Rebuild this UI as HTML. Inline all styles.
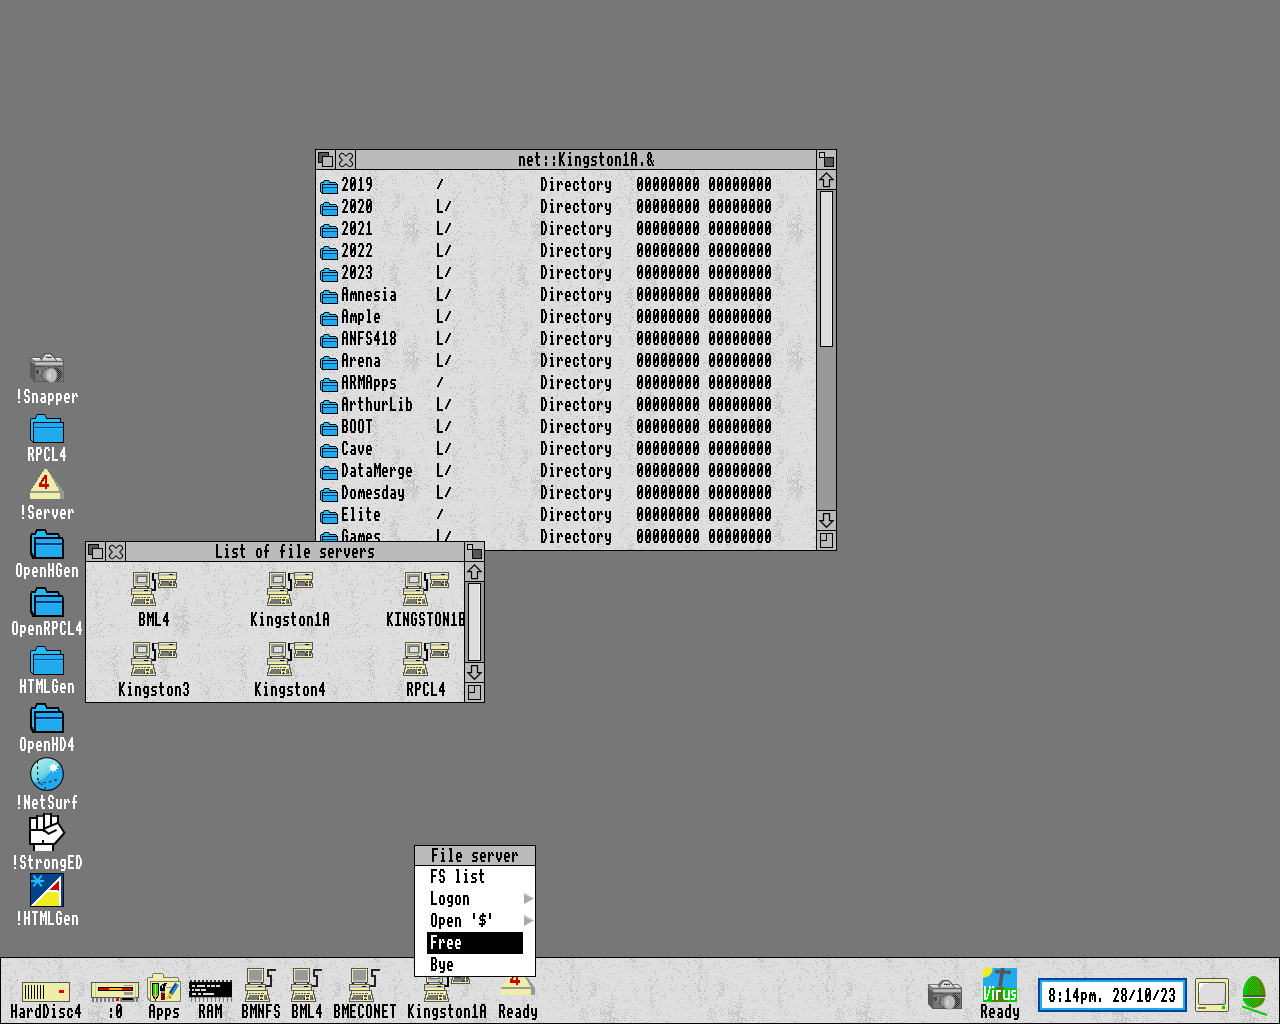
<!DOCTYPE html>
<html lang="en"><head><meta charset="utf-8"><title>RISC OS desktop - net::Kingston1A.&amp;</title><style>
html,body{margin:0;padding:0}
body{width:1280px;height:1024px;overflow:hidden;background:#777;position:relative;font-family:"Liberation Mono",monospace}
svg{position:absolute;display:block;left:0;top:0}
.t{position:absolute;height:16px;font:bold 13.33px/16px "Liberation Mono",monospace;color:transparent;white-space:pre;overflow:hidden}
.win{position:absolute;background:#000;overflow:hidden}
.tb{position:absolute;width:19px;height:19px;background:#bbb;overflow:hidden}
.tbar{position:absolute;height:19px;background:#bbb;overflow:hidden}
.well{position:absolute;width:19px;background:#999}
.sl{position:absolute;left:3px;width:11px;border:1px solid #000;background:#ddd;box-shadow:inset -1px 0 #f2f2f2}
.wc{position:absolute;left:1px;top:21px;overflow:hidden;background:#ddd}
.ibar{position:absolute;left:0;top:957px;width:1278px;height:65px;border:1px solid #000;overflow:hidden;background:#ddd;z-index:3}
.menu{position:absolute;left:414px;top:845px;width:120px;height:130px;border:1px solid #000;background:#fff;z-index:4;overflow:hidden}
.mt{position:absolute;left:0;top:0;width:120px;height:19px;background:#bbb;border-bottom:1px solid #000}
.mi{position:absolute;left:0;width:120px;height:22px}
.hl{position:absolute;left:12px;top:0;width:96px;height:22px;background:#000}
</style></head>
<body>
<svg width="0" height="0" style="position:absolute"><defs><pattern id="tx" width="128" height="128" patternUnits="userSpaceOnUse"><rect width="128" height="128" fill="#dedede"/><path fill="#bdbdbd" d="M6 0h1v1h-1zM16 0h1v1h-1zM26 0h1v1h-1zM28 0h1v1h-1zM48 0h1v1h-1zM54 0h1v1h-1zM57 0h1v1h-1zM59 0h1v1h-1zM62 0h1v1h-1zM66 0h1v1h-1zM118 0h1v1h-1zM120 0h1v1h-1zM122 0h1v1h-1zM32 1h1v1h-1zM59 1h1v1h-1zM68 1h1v1h-1zM90 1h1v1h-1zM117 1h1v1h-1zM118 1h1v1h-1zM121 1h1v1h-1zM20 2h1v1h-1zM46 2h1v1h-1zM52 2h1v1h-1zM54 2h1v1h-1zM60 2h1v1h-1zM86 2h1v1h-1zM120 2h1v1h-1zM122 2h1v1h-1zM22 3h1v1h-1zM29 3h1v1h-1zM53 3h1v1h-1zM55 3h1v1h-1zM59 3h1v1h-1zM93 3h1v1h-1zM111 3h1v1h-1zM115 3h1v1h-1zM119 3h1v1h-1zM120 3h1v1h-1zM121 3h1v1h-1zM125 3h1v1h-1zM6 4h1v1h-1zM20 4h1v1h-1zM28 4h1v1h-1zM32 4h1v1h-1zM34 4h1v1h-1zM47 4h1v1h-1zM60 4h1v1h-1zM78 4h1v1h-1zM89 4h1v1h-1zM114 4h1v1h-1zM116 4h1v1h-1zM122 4h1v1h-1zM7 5h1v1h-1zM23 5h1v1h-1zM29 5h1v1h-1zM47 5h1v1h-1zM55 5h1v1h-1zM57 5h1v1h-1zM73 5h1v1h-1zM120 5h1v1h-1zM4 6h1v1h-1zM28 6h1v1h-1zM32 6h1v1h-1zM39 6h1v1h-1zM54 6h1v1h-1zM58 6h1v1h-1zM60 6h1v1h-1zM62 6h1v1h-1zM73 6h1v1h-1zM76 6h1v1h-1zM100 6h1v1h-1zM122 6h1v1h-1zM1 7h1v1h-1zM5 7h1v1h-1zM9 7h1v1h-1zM36 7h1v1h-1zM44 7h1v1h-1zM47 7h1v1h-1zM59 7h1v1h-1zM61 7h1v1h-1zM100 7h1v1h-1zM105 7h1v1h-1zM117 7h1v1h-1zM1 8h1v1h-1zM50 8h1v1h-1zM58 8h1v1h-1zM59 8h1v1h-1zM70 8h1v1h-1zM73 8h1v1h-1zM120 8h1v1h-1zM122 8h1v1h-1zM124 8h1v1h-1zM27 9h1v1h-1zM43 9h1v1h-1zM57 9h1v1h-1zM59 9h1v1h-1zM61 9h1v1h-1zM79 9h1v1h-1zM87 9h1v1h-1zM96 9h1v1h-1zM106 9h1v1h-1zM119 9h1v1h-1zM21 10h1v1h-1zM25 10h1v1h-1zM33 10h1v1h-1zM34 10h1v1h-1zM58 10h1v1h-1zM69 10h1v1h-1zM76 10h1v1h-1zM123 10h1v1h-1zM4 11h1v1h-1zM56 11h1v1h-1zM60 11h1v1h-1zM61 11h1v1h-1zM66 11h1v1h-1zM67 11h1v1h-1zM86 11h1v1h-1zM117 11h1v1h-1zM120 11h1v1h-1zM10 12h1v1h-1zM35 12h1v1h-1zM38 12h1v1h-1zM47 12h1v1h-1zM63 12h1v1h-1zM107 12h1v1h-1zM0 13h1v1h-1zM14 13h1v1h-1zM37 13h1v1h-1zM40 13h1v1h-1zM46 13h1v1h-1zM59 13h1v1h-1zM76 13h1v1h-1zM79 13h1v1h-1zM1 14h1v1h-1zM14 14h1v1h-1zM58 14h1v1h-1zM60 14h1v1h-1zM61 14h1v1h-1zM65 14h1v1h-1zM66 14h1v1h-1zM110 14h1v1h-1zM126 14h1v1h-1zM4 15h1v1h-1zM39 15h1v1h-1zM53 15h1v1h-1zM55 15h1v1h-1zM57 15h1v1h-1zM63 15h1v1h-1zM82 15h1v1h-1zM97 15h1v1h-1zM101 15h1v1h-1zM14 16h1v1h-1zM47 16h1v1h-1zM52 16h1v1h-1zM29 17h1v1h-1zM59 17h1v1h-1zM65 17h1v1h-1zM10 18h1v1h-1zM30 18h1v1h-1zM37 18h1v1h-1zM45 18h1v1h-1zM48 18h1v1h-1zM60 18h1v1h-1zM66 18h1v1h-1zM94 18h1v1h-1zM117 18h1v1h-1zM1 19h1v1h-1zM25 19h1v1h-1zM31 19h1v1h-1zM42 19h1v1h-1zM47 19h1v1h-1zM52 19h1v1h-1zM59 19h1v1h-1zM60 19h1v1h-1zM61 19h1v1h-1zM102 19h1v1h-1zM5 20h1v1h-1zM30 20h1v1h-1zM31 20h1v1h-1zM60 20h1v1h-1zM74 20h1v1h-1zM79 20h1v1h-1zM83 20h1v1h-1zM9 21h1v1h-1zM16 21h1v1h-1zM57 21h1v1h-1zM65 21h1v1h-1zM77 21h1v1h-1zM7 22h1v1h-1zM9 22h1v1h-1zM15 22h1v1h-1zM16 22h1v1h-1zM31 22h1v1h-1zM50 22h1v1h-1zM58 22h1v1h-1zM62 22h1v1h-1zM66 22h1v1h-1zM86 22h1v1h-1zM107 22h1v1h-1zM119 22h1v1h-1zM10 23h1v1h-1zM24 23h1v1h-1zM59 23h1v1h-1zM64 23h1v1h-1zM77 23h1v1h-1zM83 23h1v1h-1zM14 24h1v1h-1zM58 24h1v1h-1zM69 24h1v1h-1zM78 24h1v1h-1zM80 24h1v1h-1zM81 24h1v1h-1zM106 24h1v1h-1zM53 25h1v1h-1zM54 25h1v1h-1zM65 25h1v1h-1zM79 25h1v1h-1zM81 25h1v1h-1zM83 25h1v1h-1zM89 25h1v1h-1zM104 25h1v1h-1zM118 25h1v1h-1zM119 25h1v1h-1zM8 26h1v1h-1zM12 26h1v1h-1zM30 26h1v1h-1zM41 26h1v1h-1zM56 26h1v1h-1zM60 26h1v1h-1zM66 26h1v1h-1zM73 26h1v1h-1zM78 26h1v1h-1zM82 26h1v1h-1zM86 26h1v1h-1zM5 27h1v1h-1zM13 27h1v1h-1zM35 27h1v1h-1zM45 27h1v1h-1zM47 27h1v1h-1zM57 27h1v1h-1zM74 27h1v1h-1zM79 27h1v1h-1zM81 27h1v1h-1zM83 27h1v1h-1zM92 27h1v1h-1zM95 27h1v1h-1zM105 27h1v1h-1zM4 28h1v1h-1zM8 28h1v1h-1zM10 28h1v1h-1zM42 28h1v1h-1zM44 28h1v1h-1zM50 28h1v1h-1zM54 28h1v1h-1zM55 28h1v1h-1zM58 28h1v1h-1zM80 28h1v1h-1zM82 28h1v1h-1zM86 28h1v1h-1zM9 29h1v1h-1zM11 29h1v1h-1zM33 29h1v1h-1zM42 29h1v1h-1zM57 29h1v1h-1zM64 29h1v1h-1zM81 29h1v1h-1zM87 29h1v1h-1zM4 30h1v1h-1zM10 30h1v1h-1zM12 30h1v1h-1zM17 30h1v1h-1zM21 30h1v1h-1zM56 30h1v1h-1zM58 30h1v1h-1zM79 30h1v1h-1zM82 30h1v1h-1zM85 30h1v1h-1zM122 30h1v1h-1zM126 30h1v1h-1zM9 31h1v1h-1zM10 31h1v1h-1zM30 31h1v1h-1zM41 31h1v1h-1zM52 31h1v1h-1zM57 31h1v1h-1zM69 31h1v1h-1zM79 31h1v1h-1zM81 31h1v1h-1zM83 31h1v1h-1zM88 31h1v1h-1zM109 31h1v1h-1zM121 31h1v1h-1zM122 31h1v1h-1zM22 32h1v1h-1zM28 32h1v1h-1zM32 32h1v1h-1zM41 32h1v1h-1zM57 32h1v1h-1zM60 32h1v1h-1zM63 32h1v1h-1zM64 32h1v1h-1zM77 32h1v1h-1zM81 32h1v1h-1zM82 32h1v1h-1zM83 32h1v1h-1zM102 32h1v1h-1zM122 32h1v1h-1zM4 33h1v1h-1zM9 33h1v1h-1zM32 33h1v1h-1zM44 33h1v1h-1zM57 33h1v1h-1zM58 33h1v1h-1zM59 33h1v1h-1zM63 33h1v1h-1zM77 33h1v1h-1zM96 33h1v1h-1zM119 33h1v1h-1zM124 33h1v1h-1zM10 34h1v1h-1zM15 34h1v1h-1zM44 34h1v1h-1zM54 34h1v1h-1zM78 34h1v1h-1zM80 34h1v1h-1zM82 34h1v1h-1zM12 35h1v1h-1zM16 35h1v1h-1zM58 35h1v1h-1zM61 35h1v1h-1zM72 35h1v1h-1zM79 35h1v1h-1zM10 36h1v1h-1zM14 36h1v1h-1zM24 36h1v1h-1zM62 36h1v1h-1zM78 36h1v1h-1zM81 36h1v1h-1zM82 36h1v1h-1zM98 36h1v1h-1zM123 36h1v1h-1zM23 37h1v1h-1zM79 37h1v1h-1zM80 37h1v1h-1zM81 37h1v1h-1zM99 37h1v1h-1zM110 37h1v1h-1zM121 37h1v1h-1zM9 38h1v1h-1zM21 38h1v1h-1zM42 38h1v1h-1zM47 38h1v1h-1zM49 38h1v1h-1zM58 38h1v1h-1zM76 38h1v1h-1zM77 38h1v1h-1zM98 38h1v1h-1zM102 38h1v1h-1zM10 39h1v1h-1zM23 39h1v1h-1zM59 39h1v1h-1zM63 39h1v1h-1zM67 39h1v1h-1zM99 39h1v1h-1zM123 39h1v1h-1zM12 40h1v1h-1zM48 40h1v1h-1zM59 40h1v1h-1zM60 40h1v1h-1zM64 40h1v1h-1zM76 40h1v1h-1zM91 40h1v1h-1zM103 40h1v1h-1zM124 40h1v1h-1zM10 41h1v1h-1zM19 41h1v1h-1zM40 41h1v1h-1zM49 41h1v1h-1zM56 41h1v1h-1zM63 41h1v1h-1zM65 41h1v1h-1zM72 41h1v1h-1zM75 41h1v1h-1zM92 41h1v1h-1zM98 41h1v1h-1zM99 41h1v1h-1zM101 41h1v1h-1zM111 41h1v1h-1zM8 42h1v1h-1zM10 42h1v1h-1zM13 42h1v1h-1zM14 42h1v1h-1zM19 42h1v1h-1zM60 42h1v1h-1zM89 42h1v1h-1zM111 42h1v1h-1zM114 42h1v1h-1zM0 43h1v1h-1zM11 43h1v1h-1zM37 43h1v1h-1zM51 43h1v1h-1zM59 43h1v1h-1zM89 43h1v1h-1zM115 43h1v1h-1zM10 44h1v1h-1zM12 44h1v1h-1zM63 44h1v1h-1zM66 44h1v1h-1zM92 44h1v1h-1zM94 44h1v1h-1zM96 44h1v1h-1zM100 44h1v1h-1zM110 44h1v1h-1zM2 45h1v1h-1zM9 45h1v1h-1zM48 45h1v1h-1zM61 45h1v1h-1zM89 45h1v1h-1zM97 45h1v1h-1zM98 45h1v1h-1zM99 45h1v1h-1zM6 46h1v1h-1zM10 46h1v1h-1zM17 46h1v1h-1zM36 46h1v1h-1zM50 46h1v1h-1zM56 46h1v1h-1zM68 46h1v1h-1zM88 46h1v1h-1zM96 46h1v1h-1zM101 46h1v1h-1zM119 46h1v1h-1zM9 47h1v1h-1zM13 47h1v1h-1zM25 47h1v1h-1zM59 47h1v1h-1zM60 47h1v1h-1zM74 47h1v1h-1zM75 47h1v1h-1zM86 47h1v1h-1zM93 47h1v1h-1zM12 48h1v1h-1zM60 48h1v1h-1zM76 48h1v1h-1zM90 48h1v1h-1zM92 48h1v1h-1zM94 48h1v1h-1zM95 48h1v1h-1zM98 48h1v1h-1zM99 48h1v1h-1zM100 48h1v1h-1zM11 49h1v1h-1zM41 49h1v1h-1zM57 49h1v1h-1zM95 49h1v1h-1zM97 49h1v1h-1zM99 49h1v1h-1zM101 49h1v1h-1zM122 49h1v1h-1zM45 50h1v1h-1zM48 50h1v1h-1zM68 50h1v1h-1zM70 50h1v1h-1zM73 50h1v1h-1zM79 50h1v1h-1zM83 50h1v1h-1zM87 50h1v1h-1zM91 50h1v1h-1zM96 50h1v1h-1zM100 50h1v1h-1zM11 51h1v1h-1zM16 51h1v1h-1zM69 51h1v1h-1zM71 51h1v1h-1zM81 51h1v1h-1zM87 51h1v1h-1zM97 51h1v1h-1zM103 51h1v1h-1zM115 51h1v1h-1zM120 51h1v1h-1zM34 52h1v1h-1zM68 52h1v1h-1zM78 52h1v1h-1zM89 52h1v1h-1zM91 52h1v1h-1zM98 52h1v1h-1zM107 52h1v1h-1zM112 52h1v1h-1zM124 52h1v1h-1zM13 53h1v1h-1zM15 53h1v1h-1zM26 53h1v1h-1zM69 53h1v1h-1zM71 53h1v1h-1zM77 53h1v1h-1zM87 53h1v1h-1zM91 53h1v1h-1zM95 53h1v1h-1zM97 53h1v1h-1zM99 53h1v1h-1zM101 53h1v1h-1zM122 53h1v1h-1zM127 53h1v1h-1zM20 54h1v1h-1zM66 54h1v1h-1zM68 54h1v1h-1zM70 54h1v1h-1zM73 54h1v1h-1zM88 54h1v1h-1zM90 54h1v1h-1zM92 54h1v1h-1zM93 54h1v1h-1zM94 54h1v1h-1zM96 54h1v1h-1zM97 54h1v1h-1zM98 54h1v1h-1zM102 54h1v1h-1zM104 54h1v1h-1zM114 54h1v1h-1zM115 54h1v1h-1zM6 55h1v1h-1zM52 55h1v1h-1zM61 55h1v1h-1zM72 55h1v1h-1zM73 55h1v1h-1zM75 55h1v1h-1zM79 55h1v1h-1zM87 55h1v1h-1zM89 55h1v1h-1zM91 55h1v1h-1zM93 55h1v1h-1zM95 55h1v1h-1zM97 55h1v1h-1zM111 55h1v1h-1zM11 56h1v1h-1zM16 56h1v1h-1zM27 56h1v1h-1zM70 56h1v1h-1zM87 56h1v1h-1zM89 56h1v1h-1zM90 56h1v1h-1zM93 56h1v1h-1zM94 56h1v1h-1zM96 56h1v1h-1zM97 56h1v1h-1zM102 56h1v1h-1zM106 56h1v1h-1zM122 56h1v1h-1zM17 57h1v1h-1zM66 57h1v1h-1zM67 57h1v1h-1zM73 57h1v1h-1zM81 57h1v1h-1zM91 57h1v1h-1zM95 57h1v1h-1zM97 57h1v1h-1zM113 57h1v1h-1zM28 58h1v1h-1zM49 58h1v1h-1zM70 58h1v1h-1zM74 58h1v1h-1zM92 58h1v1h-1zM93 58h1v1h-1zM96 58h1v1h-1zM98 58h1v1h-1zM108 58h1v1h-1zM118 58h1v1h-1zM121 58h1v1h-1zM61 59h1v1h-1zM67 59h1v1h-1zM69 59h1v1h-1zM71 59h1v1h-1zM87 59h1v1h-1zM97 59h1v1h-1zM98 59h1v1h-1zM100 59h1v1h-1zM110 59h1v1h-1zM111 59h1v1h-1zM70 60h1v1h-1zM92 60h1v1h-1zM97 60h1v1h-1zM100 60h1v1h-1zM101 60h1v1h-1zM102 60h1v1h-1zM104 60h1v1h-1zM112 60h1v1h-1zM120 60h1v1h-1zM122 60h1v1h-1zM14 61h1v1h-1zM15 61h1v1h-1zM47 61h1v1h-1zM59 61h1v1h-1zM66 61h1v1h-1zM68 61h1v1h-1zM71 61h1v1h-1zM73 61h1v1h-1zM89 61h1v1h-1zM91 61h1v1h-1zM93 61h1v1h-1zM95 61h1v1h-1zM97 61h1v1h-1zM100 61h1v1h-1zM101 61h1v1h-1zM103 61h1v1h-1zM0 62h1v1h-1zM8 62h1v1h-1zM12 62h1v1h-1zM21 62h1v1h-1zM24 62h1v1h-1zM40 62h1v1h-1zM50 62h1v1h-1zM75 62h1v1h-1zM86 62h1v1h-1zM90 62h1v1h-1zM92 62h1v1h-1zM96 62h1v1h-1zM97 62h1v1h-1zM98 62h1v1h-1zM100 62h1v1h-1zM104 62h1v1h-1zM105 62h1v1h-1zM108 62h1v1h-1zM111 62h1v1h-1zM122 62h1v1h-1zM8 63h1v1h-1zM25 63h1v1h-1zM27 63h1v1h-1zM71 63h1v1h-1zM89 63h1v1h-1zM91 63h1v1h-1zM94 63h1v1h-1zM95 63h1v1h-1zM99 63h1v1h-1zM101 63h1v1h-1zM125 63h1v1h-1zM4 64h1v1h-1zM5 64h1v1h-1zM11 64h1v1h-1zM25 64h1v1h-1zM26 64h1v1h-1zM30 64h1v1h-1zM73 64h1v1h-1zM76 64h1v1h-1zM80 64h1v1h-1zM82 64h1v1h-1zM88 64h1v1h-1zM90 64h1v1h-1zM92 64h1v1h-1zM94 64h1v1h-1zM96 64h1v1h-1zM98 64h1v1h-1zM100 64h1v1h-1zM101 64h1v1h-1zM106 64h1v1h-1zM118 64h1v1h-1zM3 65h1v1h-1zM5 65h1v1h-1zM18 65h1v1h-1zM47 65h1v1h-1zM49 65h1v1h-1zM51 65h1v1h-1zM69 65h1v1h-1zM94 65h1v1h-1zM95 65h1v1h-1zM97 65h1v1h-1zM99 65h1v1h-1zM115 65h1v1h-1zM125 65h1v1h-1zM10 66h1v1h-1zM33 66h1v1h-1zM38 66h1v1h-1zM70 66h1v1h-1zM76 66h1v1h-1zM88 66h1v1h-1zM90 66h1v1h-1zM92 66h1v1h-1zM96 66h1v1h-1zM98 66h1v1h-1zM100 66h1v1h-1zM102 66h1v1h-1zM118 66h1v1h-1zM3 67h1v1h-1zM15 67h1v1h-1zM67 67h1v1h-1zM91 67h1v1h-1zM93 67h1v1h-1zM97 67h1v1h-1zM99 67h1v1h-1zM101 67h1v1h-1zM103 67h1v1h-1zM4 68h1v1h-1zM8 68h1v1h-1zM32 68h1v1h-1zM51 68h1v1h-1zM63 68h1v1h-1zM91 68h1v1h-1zM92 68h1v1h-1zM97 68h1v1h-1zM98 68h1v1h-1zM100 68h1v1h-1zM122 68h1v1h-1zM0 69h1v1h-1zM11 69h1v1h-1zM14 69h1v1h-1zM15 69h1v1h-1zM23 69h1v1h-1zM39 69h1v1h-1zM80 69h1v1h-1zM87 69h1v1h-1zM89 69h1v1h-1zM95 69h1v1h-1zM97 69h1v1h-1zM8 70h1v1h-1zM10 70h1v1h-1zM12 70h1v1h-1zM56 70h1v1h-1zM90 70h1v1h-1zM97 70h1v1h-1zM98 70h1v1h-1zM101 70h1v1h-1zM5 71h1v1h-1zM13 71h1v1h-1zM33 71h1v1h-1zM48 71h1v1h-1zM72 71h1v1h-1zM93 71h1v1h-1zM95 71h1v1h-1zM97 71h1v1h-1zM99 71h1v1h-1zM119 71h1v1h-1zM120 71h1v1h-1zM3 72h1v1h-1zM6 72h1v1h-1zM7 72h1v1h-1zM8 72h1v1h-1zM48 72h1v1h-1zM54 72h1v1h-1zM66 72h1v1h-1zM87 72h1v1h-1zM88 72h1v1h-1zM102 72h1v1h-1zM115 72h1v1h-1zM122 72h1v1h-1zM126 72h1v1h-1zM1 73h1v1h-1zM13 73h1v1h-1zM23 73h1v1h-1zM79 73h1v1h-1zM88 73h1v1h-1zM95 73h1v1h-1zM97 73h1v1h-1zM6 74h1v1h-1zM10 74h1v1h-1zM13 74h1v1h-1zM17 74h1v1h-1zM18 74h1v1h-1zM52 74h1v1h-1zM98 74h1v1h-1zM3 75h1v1h-1zM17 75h1v1h-1zM99 75h1v1h-1zM115 75h1v1h-1zM0 76h1v1h-1zM4 76h1v1h-1zM94 76h1v1h-1zM59 77h1v1h-1zM116 77h1v1h-1zM32 78h1v1h-1zM54 78h1v1h-1zM87 78h1v1h-1zM28 79h1v1h-1zM50 79h1v1h-1zM85 79h1v1h-1zM85 80h1v1h-1zM107 80h1v1h-1zM127 80h1v1h-1zM41 81h1v1h-1zM48 81h1v1h-1zM85 81h1v1h-1zM113 81h1v1h-1zM62 82h1v1h-1zM65 82h1v1h-1zM67 82h1v1h-1zM113 82h1v1h-1zM29 83h1v1h-1zM81 83h1v1h-1zM104 83h1v1h-1zM107 83h1v1h-1zM111 83h1v1h-1zM112 83h1v1h-1zM118 83h1v1h-1zM6 84h1v1h-1zM19 84h1v1h-1zM25 84h1v1h-1zM30 84h1v1h-1zM34 84h1v1h-1zM51 84h1v1h-1zM111 84h1v1h-1zM2 85h1v1h-1zM74 85h1v1h-1zM78 85h1v1h-1zM83 85h1v1h-1zM127 85h1v1h-1zM27 86h1v1h-1zM29 86h1v1h-1zM37 86h1v1h-1zM55 86h1v1h-1zM56 86h1v1h-1zM58 86h1v1h-1zM64 86h1v1h-1zM80 86h1v1h-1zM82 86h1v1h-1zM86 86h1v1h-1zM25 87h1v1h-1zM27 87h1v1h-1zM29 87h1v1h-1zM63 87h1v1h-1zM68 87h1v1h-1zM101 87h1v1h-1zM107 87h1v1h-1zM1 88h1v1h-1zM23 88h1v1h-1zM32 88h1v1h-1zM34 88h1v1h-1zM64 88h1v1h-1zM96 88h1v1h-1zM5 89h1v1h-1zM7 89h1v1h-1zM10 89h1v1h-1zM11 89h1v1h-1zM16 89h1v1h-1zM19 89h1v1h-1zM49 89h1v1h-1zM79 89h1v1h-1zM81 89h1v1h-1zM84 89h1v1h-1zM122 89h1v1h-1zM1 90h1v1h-1zM6 90h1v1h-1zM16 90h1v1h-1zM21 90h1v1h-1zM26 90h1v1h-1zM27 90h1v1h-1zM30 90h1v1h-1zM47 90h1v1h-1zM51 90h1v1h-1zM55 90h1v1h-1zM62 90h1v1h-1zM74 90h1v1h-1zM80 90h1v1h-1zM87 90h1v1h-1zM103 90h1v1h-1zM18 91h1v1h-1zM25 91h1v1h-1zM31 91h1v1h-1zM34 91h1v1h-1zM76 91h1v1h-1zM77 91h1v1h-1zM79 91h1v1h-1zM83 91h1v1h-1zM90 91h1v1h-1zM107 91h1v1h-1zM109 91h1v1h-1zM113 91h1v1h-1zM22 92h1v1h-1zM31 92h1v1h-1zM68 92h1v1h-1zM114 92h1v1h-1zM125 92h1v1h-1zM10 93h1v1h-1zM29 93h1v1h-1zM30 93h1v1h-1zM68 93h1v1h-1zM77 93h1v1h-1zM85 93h1v1h-1zM92 93h1v1h-1zM119 93h1v1h-1zM1 94h1v1h-1zM8 94h1v1h-1zM28 94h1v1h-1zM29 94h1v1h-1zM32 94h1v1h-1zM63 94h1v1h-1zM68 94h1v1h-1zM78 94h1v1h-1zM80 94h1v1h-1zM12 95h1v1h-1zM13 95h1v1h-1zM25 95h1v1h-1zM27 95h1v1h-1zM28 95h1v1h-1zM49 95h1v1h-1zM78 95h1v1h-1zM101 95h1v1h-1zM106 95h1v1h-1zM113 95h1v1h-1zM8 96h1v1h-1zM14 96h1v1h-1zM23 96h1v1h-1zM26 96h1v1h-1zM67 96h1v1h-1zM74 96h1v1h-1zM76 96h1v1h-1zM1 97h1v1h-1zM27 97h1v1h-1zM29 97h1v1h-1zM41 97h1v1h-1zM55 97h1v1h-1zM67 97h1v1h-1zM75 97h1v1h-1zM77 97h1v1h-1zM78 97h1v1h-1zM79 97h1v1h-1zM81 97h1v1h-1zM112 97h1v1h-1zM113 97h1v1h-1zM118 97h1v1h-1zM11 98h1v1h-1zM18 98h1v1h-1zM30 98h1v1h-1zM34 98h1v1h-1zM53 98h1v1h-1zM56 98h1v1h-1zM57 98h1v1h-1zM76 98h1v1h-1zM77 98h1v1h-1zM80 98h1v1h-1zM82 98h1v1h-1zM88 98h1v1h-1zM104 98h1v1h-1zM105 98h1v1h-1zM108 98h1v1h-1zM25 99h1v1h-1zM31 99h1v1h-1zM63 99h1v1h-1zM74 99h1v1h-1zM77 99h1v1h-1zM81 99h1v1h-1zM112 99h1v1h-1zM118 99h1v1h-1zM121 99h1v1h-1zM22 100h1v1h-1zM32 100h1v1h-1zM41 100h1v1h-1zM48 100h1v1h-1zM64 100h1v1h-1zM73 100h1v1h-1zM74 100h1v1h-1zM76 100h1v1h-1zM81 100h1v1h-1zM21 101h1v1h-1zM26 101h1v1h-1zM27 101h1v1h-1zM29 101h1v1h-1zM31 101h1v1h-1zM50 101h1v1h-1zM53 101h1v1h-1zM78 101h1v1h-1zM91 101h1v1h-1zM95 101h1v1h-1zM111 101h1v1h-1zM123 101h1v1h-1zM3 102h1v1h-1zM20 102h1v1h-1zM26 102h1v1h-1zM28 102h1v1h-1zM50 102h1v1h-1zM62 102h1v1h-1zM68 102h1v1h-1zM76 102h1v1h-1zM80 102h1v1h-1zM90 102h1v1h-1zM115 102h1v1h-1zM13 103h1v1h-1zM15 103h1v1h-1zM23 103h1v1h-1zM25 103h1v1h-1zM27 103h1v1h-1zM29 103h1v1h-1zM51 103h1v1h-1zM71 103h1v1h-1zM73 103h1v1h-1zM75 103h1v1h-1zM79 103h1v1h-1zM96 103h1v1h-1zM28 104h1v1h-1zM30 104h1v1h-1zM37 104h1v1h-1zM47 104h1v1h-1zM74 104h1v1h-1zM76 104h1v1h-1zM78 104h1v1h-1zM80 104h1v1h-1zM87 104h1v1h-1zM98 104h1v1h-1zM27 105h1v1h-1zM77 105h1v1h-1zM79 105h1v1h-1zM80 105h1v1h-1zM17 106h1v1h-1zM48 106h1v1h-1zM49 106h1v1h-1zM78 106h1v1h-1zM108 106h1v1h-1zM20 107h1v1h-1zM27 107h1v1h-1zM28 107h1v1h-1zM31 107h1v1h-1zM73 107h1v1h-1zM75 107h1v1h-1zM78 107h1v1h-1zM79 107h1v1h-1zM94 107h1v1h-1zM125 107h1v1h-1zM13 108h1v1h-1zM14 108h1v1h-1zM18 108h1v1h-1zM25 108h1v1h-1zM28 108h1v1h-1zM29 108h1v1h-1zM30 108h1v1h-1zM32 108h1v1h-1zM47 108h1v1h-1zM55 108h1v1h-1zM58 108h1v1h-1zM66 108h1v1h-1zM67 108h1v1h-1zM68 108h1v1h-1zM76 108h1v1h-1zM77 108h1v1h-1zM80 108h1v1h-1zM101 108h1v1h-1zM27 109h1v1h-1zM75 109h1v1h-1zM78 109h1v1h-1zM79 109h1v1h-1zM10 110h1v1h-1zM24 110h1v1h-1zM30 110h1v1h-1zM32 110h1v1h-1zM42 110h1v1h-1zM49 110h1v1h-1zM60 110h1v1h-1zM74 110h1v1h-1zM75 110h1v1h-1zM76 110h1v1h-1zM77 110h1v1h-1zM80 110h1v1h-1zM82 110h1v1h-1zM104 110h1v1h-1zM28 111h1v1h-1zM30 111h1v1h-1zM52 111h1v1h-1zM66 111h1v1h-1zM67 111h1v1h-1zM80 111h1v1h-1zM83 111h1v1h-1zM85 111h1v1h-1zM112 111h1v1h-1zM114 111h1v1h-1zM115 111h1v1h-1zM28 112h1v1h-1zM30 112h1v1h-1zM55 112h1v1h-1zM72 112h1v1h-1zM78 112h1v1h-1zM80 112h1v1h-1zM82 112h1v1h-1zM98 112h1v1h-1zM114 112h1v1h-1zM27 113h1v1h-1zM31 113h1v1h-1zM77 113h1v1h-1zM79 113h1v1h-1zM81 113h1v1h-1zM83 113h1v1h-1zM88 113h1v1h-1zM89 113h1v1h-1zM120 113h1v1h-1zM126 113h1v1h-1zM29 114h1v1h-1zM31 114h1v1h-1zM33 114h1v1h-1zM57 114h1v1h-1zM72 114h1v1h-1zM75 114h1v1h-1zM81 114h1v1h-1zM82 114h1v1h-1zM84 114h1v1h-1zM94 114h1v1h-1zM114 114h1v1h-1zM27 115h1v1h-1zM31 115h1v1h-1zM59 115h1v1h-1zM74 115h1v1h-1zM82 115h1v1h-1zM125 115h1v1h-1zM126 115h1v1h-1zM32 116h1v1h-1zM77 116h1v1h-1zM78 116h1v1h-1zM81 116h1v1h-1zM102 116h1v1h-1zM108 116h1v1h-1zM117 116h1v1h-1zM127 116h1v1h-1zM31 117h1v1h-1zM44 117h1v1h-1zM56 117h1v1h-1zM61 117h1v1h-1zM79 117h1v1h-1zM4 118h1v1h-1zM10 118h1v1h-1zM15 118h1v1h-1zM17 118h1v1h-1zM20 118h1v1h-1zM26 118h1v1h-1zM27 118h1v1h-1zM28 118h1v1h-1zM58 118h1v1h-1zM60 118h1v1h-1zM78 118h1v1h-1zM84 118h1v1h-1zM110 118h1v1h-1zM118 118h1v1h-1zM124 118h1v1h-1zM31 119h1v1h-1zM51 119h1v1h-1zM57 119h1v1h-1zM58 119h1v1h-1zM59 119h1v1h-1zM61 119h1v1h-1zM77 119h1v1h-1zM81 119h1v1h-1zM1 120h1v1h-1zM4 120h1v1h-1zM14 120h1v1h-1zM19 120h1v1h-1zM27 120h1v1h-1zM29 120h1v1h-1zM32 120h1v1h-1zM56 120h1v1h-1zM88 120h1v1h-1zM112 120h1v1h-1zM113 120h1v1h-1zM114 120h1v1h-1zM116 120h1v1h-1zM7 121h1v1h-1zM30 121h1v1h-1zM35 121h1v1h-1zM46 121h1v1h-1zM48 121h1v1h-1zM57 121h1v1h-1zM59 121h1v1h-1zM73 121h1v1h-1zM115 121h1v1h-1zM125 121h1v1h-1zM0 122h1v1h-1zM28 122h1v1h-1zM42 122h1v1h-1zM50 122h1v1h-1zM56 122h1v1h-1zM58 122h1v1h-1zM60 122h1v1h-1zM69 122h1v1h-1zM70 122h1v1h-1zM79 122h1v1h-1zM120 122h1v1h-1zM25 123h1v1h-1zM55 123h1v1h-1zM56 123h1v1h-1zM58 123h1v1h-1zM59 123h1v1h-1zM117 123h1v1h-1zM120 123h1v1h-1zM6 124h1v1h-1zM8 124h1v1h-1zM21 124h1v1h-1zM30 124h1v1h-1zM37 124h1v1h-1zM44 124h1v1h-1zM52 124h1v1h-1zM54 124h1v1h-1zM59 124h1v1h-1zM67 124h1v1h-1zM72 124h1v1h-1zM77 124h1v1h-1zM79 124h1v1h-1zM114 124h1v1h-1zM116 124h1v1h-1zM120 124h1v1h-1zM29 125h1v1h-1zM30 125h1v1h-1zM35 125h1v1h-1zM57 125h1v1h-1zM59 125h1v1h-1zM72 125h1v1h-1zM76 125h1v1h-1zM83 125h1v1h-1zM84 125h1v1h-1zM97 125h1v1h-1zM102 125h1v1h-1zM121 125h1v1h-1zM123 125h1v1h-1zM4 126h1v1h-1zM26 126h1v1h-1zM56 126h1v1h-1zM60 126h1v1h-1zM77 126h1v1h-1zM94 126h1v1h-1zM114 126h1v1h-1zM118 126h1v1h-1zM122 126h1v1h-1zM9 127h1v1h-1zM25 127h1v1h-1zM29 127h1v1h-1zM31 127h1v1h-1zM55 127h1v1h-1zM56 127h1v1h-1zM57 127h1v1h-1zM58 127h1v1h-1zM61 127h1v1h-1zM89 127h1v1h-1zM123 127h1v1h-1z"/></pattern><path id="g21" d="M3 0h2v10h-2zM3 12h2v2h-2z"/><path id="g24" d="M4 0h2v2h-2zM2 2h6v2h-6zM1 4h2v2h-2zM4 4h1v2h-1zM2 6h5v2h-5zM4 8h1v2h-1zM6 8h2v2h-2zM1 10h6v2h-6zM3 12h2v2h-2z"/><path id="g26" d="M2 0h3v2h-3zM1 2h2v4h-2zM4 2h2v4h-2zM2 6h3v2h-3zM1 8h2v4h-2zM4 8h2v2h-2zM7 8h1v2h-1zM5 10h2v2h-2zM2 12h3v2h-3zM6 12h2v2h-2z"/><path id="g27" d="M3 0h2v6h-2z"/><path id="g2e" d="M3 10h2v4h-2z"/><path id="g2f" d="M5 2h2v2h-2zM4 4h2v2h-2zM3 6h2v2h-2zM2 8h2v2h-2zM1 10h2v2h-2z"/><path id="g30" d="M2 0h4v2h-4zM1 2h2v4h-2zM5 2h2v2h-2zM4 4h3v2h-3zM1 6h6v2h-6zM1 8h3v2h-3zM5 8h2v4h-2zM1 10h2v2h-2zM2 12h4v2h-4z"/><path id="g31" d="M3 0h2v2h-2zM2 2h3v2h-3zM3 4h2v8h-2zM1 12h6v2h-6z"/><path id="g32" d="M2 0h4v2h-4zM1 2h2v2h-2zM5 2h2v4h-2zM4 6h2v2h-2zM3 8h2v2h-2zM2 10h2v2h-2zM1 12h6v2h-6z"/><path id="g33" d="M2 0h4v2h-4zM1 2h2v2h-2zM5 2h2v4h-2zM3 6h3v2h-3zM5 8h2v4h-2zM1 10h2v2h-2zM2 12h4v2h-4z"/><path id="g34" d="M4 0h2v2h-2zM3 2h3v2h-3zM2 4h4v2h-4zM1 6h2v2h-2zM4 6h2v2h-2zM1 8h6v2h-6zM4 10h2v4h-2z"/><path id="g38" d="M2 0h4v2h-4zM1 2h2v4h-2zM5 2h2v4h-2zM2 6h4v2h-4zM1 8h2v4h-2zM5 8h2v4h-2zM2 12h4v2h-4z"/><path id="g39" d="M2 0h4v2h-4zM1 2h2v4h-2zM5 2h2v4h-2zM2 6h5v2h-5zM5 8h2v2h-2zM4 10h2v2h-2zM2 12h3v2h-3z"/><path id="g3a" d="M3 4h2v4h-2zM3 10h2v4h-2z"/><path id="g41" d="M2 0h4v2h-4zM1 2h2v4h-2zM5 2h2v4h-2zM1 6h6v2h-6zM1 8h2v6h-2zM5 8h2v6h-2z"/><path id="g42" d="M1 0h5v2h-5zM1 2h2v4h-2zM5 2h2v4h-2zM1 6h5v2h-5zM1 8h2v4h-2zM5 8h2v4h-2zM1 12h5v2h-5z"/><path id="g43" d="M2 0h4v2h-4zM1 2h2v10h-2zM5 2h2v2h-2zM5 10h2v2h-2zM2 12h4v2h-4z"/><path id="g44" d="M1 0h4v2h-4zM1 2h2v10h-2zM4 2h2v2h-2zM5 4h2v6h-2zM4 10h2v2h-2zM1 12h4v2h-4z"/><path id="g45" d="M1 0h6v2h-6zM1 2h2v4h-2zM1 6h5v2h-5zM1 8h2v4h-2zM1 12h6v2h-6z"/><path id="g46" d="M1 0h6v2h-6zM1 2h2v4h-2zM1 6h5v2h-5zM1 8h2v6h-2z"/><path id="g47" d="M2 0h4v2h-4zM1 2h2v10h-2zM5 2h2v2h-2zM4 6h3v2h-3zM5 8h2v4h-2zM2 12h4v2h-4z"/><path id="g48" d="M1 0h2v6h-2zM5 0h2v6h-2zM1 6h6v2h-6zM1 8h2v6h-2zM5 8h2v6h-2z"/><path id="g49" d="M1 0h6v2h-6zM3 2h2v10h-2zM1 12h6v2h-6z"/><path id="g4b" d="M1 0h2v4h-2zM5 0h2v2h-2zM4 2h2v2h-2zM1 4h4v2h-4zM1 6h3v2h-3zM1 8h4v2h-4zM1 10h2v4h-2zM4 10h2v2h-2zM5 12h2v2h-2z"/><path id="g4c" d="M1 0h2v12h-2zM1 12h6v2h-6z"/><path id="g4d" d="M1 0h2v2h-2zM6 0h2v2h-2zM1 2h3v2h-3zM5 2h3v2h-3zM1 4h7v2h-7zM1 6h2v8h-2zM4 6h1v4h-1zM6 6h2v8h-2z"/><path id="g4e" d="M1 0h2v4h-2zM5 0h2v6h-2zM1 4h3v2h-3zM1 6h6v2h-6zM1 8h2v6h-2zM4 8h3v2h-3zM5 10h2v4h-2z"/><path id="g4f" d="M2 0h4v2h-4zM1 2h2v10h-2zM5 2h2v10h-2zM2 12h4v2h-4z"/><path id="g50" d="M1 0h5v2h-5zM1 2h2v4h-2zM5 2h2v4h-2zM1 6h5v2h-5zM1 8h2v6h-2z"/><path id="g52" d="M1 0h5v2h-5zM1 2h2v4h-2zM5 2h2v4h-2zM1 6h5v2h-5zM1 8h2v6h-2zM4 8h2v2h-2zM5 10h2v4h-2z"/><path id="g53" d="M2 0h4v2h-4zM1 2h2v4h-2zM5 2h2v2h-2zM2 6h4v2h-4zM5 8h2v4h-2zM1 10h2v2h-2zM2 12h4v2h-4z"/><path id="g54" d="M1 0h6v2h-6zM3 2h2v12h-2z"/><path id="g61" d="M2 4h4v2h-4zM5 6h2v2h-2zM2 8h5v2h-5zM1 10h2v2h-2zM5 10h2v2h-2zM2 12h5v2h-5z"/><path id="g62" d="M1 0h2v4h-2zM1 4h5v2h-5zM1 6h2v6h-2zM5 6h2v6h-2zM1 12h5v2h-5z"/><path id="g63" d="M2 4h4v2h-4zM1 6h2v6h-2zM5 6h2v2h-2zM5 10h2v2h-2zM2 12h4v2h-4z"/><path id="g64" d="M5 0h2v4h-2zM2 4h5v2h-5zM1 6h2v6h-2zM5 6h2v6h-2zM2 12h5v2h-5z"/><path id="g65" d="M2 4h4v2h-4zM1 6h2v2h-2zM5 6h2v2h-2zM1 8h6v2h-6zM1 10h2v2h-2zM2 12h4v2h-4z"/><path id="g66" d="M3 0h3v2h-3zM2 2h2v4h-2zM1 6h5v2h-5zM2 8h2v6h-2z"/><path id="g67" d="M2 4h5v2h-5zM1 6h2v4h-2zM5 6h2v4h-2zM2 10h5v2h-5zM5 12h2v2h-2zM2 14h4v2h-4z"/><path id="g68" d="M1 0h2v4h-2zM1 4h5v2h-5zM1 6h2v8h-2zM5 6h2v8h-2z"/><path id="g69" d="M3 0h2v2h-2zM2 4h3v2h-3zM3 6h2v6h-2zM2 12h4v2h-4z"/><path id="g6c" d="M2 0h3v2h-3zM3 2h2v10h-2zM2 12h4v2h-4z"/><path id="g6d" d="M2 4h2v2h-2zM5 4h2v2h-2zM1 6h7v2h-7zM1 8h2v6h-2zM4 8h1v4h-1zM6 8h2v6h-2z"/><path id="g6e" d="M1 4h5v2h-5zM1 6h2v8h-2zM5 6h2v8h-2z"/><path id="g6f" d="M2 4h4v2h-4zM1 6h2v6h-2zM5 6h2v6h-2zM2 12h4v2h-4z"/><path id="g70" d="M1 4h5v2h-5zM1 6h2v4h-2zM5 6h2v4h-2zM1 10h5v2h-5zM1 12h2v4h-2z"/><path id="g72" d="M1 4h2v2h-2zM4 4h2v2h-2zM1 6h3v2h-3zM5 6h2v2h-2zM1 8h2v6h-2z"/><path id="g73" d="M2 4h5v2h-5zM1 6h2v2h-2zM2 8h4v2h-4zM5 10h2v2h-2zM1 12h5v2h-5z"/><path id="g74" d="M2 0h2v4h-2zM1 4h5v2h-5zM2 6h2v6h-2zM3 12h3v2h-3z"/><path id="g75" d="M1 4h2v8h-2zM5 4h2v8h-2zM2 12h5v2h-5z"/><path id="g76" d="M1 4h2v6h-2zM5 4h2v6h-2zM2 10h4v2h-4zM3 12h2v2h-2z"/><path id="g79" d="M1 4h2v6h-2zM5 4h2v6h-2zM2 10h5v2h-5zM5 12h2v2h-2zM2 14h4v2h-4z"/></defs></svg>
<svg style="left:30px;top:353px" width="34" height="30" viewBox="0 0 34 30"><defs><pattern id="cck" width="2" height="2" patternUnits="userSpaceOnUse"><rect width="2" height="2" fill="#777"/><rect width="1" height="1" fill="#222"/><rect x="1" y="1" width="1" height="1" fill="#222"/></pattern></defs><path d="M0 4.3H10L14.3 0H20.7L25 4.3H30.5L34 7.8V29H4.7L0 24z" fill="#555"/><path d="M0.6 5.2L4.6 9.2V27.8L0.6 23.7z" fill="#5a5a5a"/><path d="M0.6 5.2L4.6 9.2V12L0.6 8z" fill="#8a8a8a"/><path d="M1.2 5h8.4l1.6 2.7H4.6z" fill="#eee"/><path d="M3.4 6.6h7.2l0.6 1.1H4.6z" fill="#bbb"/><path d="M25.2 5h5l2.7 2.7H27.4z" fill="#eee"/><path d="M26.6 6.6h5l1.1 1.1H27.4z" fill="#bbb"/><path d="M10.4 4.2L14.6 0.6H16.4L11.8 7.6z" fill="#777"/><path d="M11.8 7.6L16 1.6H20.6L26 7.6z" fill="#eee"/><path d="M13 6.2h11.6l1.4 1.4H11.8z" fill="#c4c4c4"/><path d="M16.2 5.2q0.2-1.4 1.4-1.2q1 0.3 1.2 1.2q0.3-1.3 1.5-1.2q1 0.2 1.3 1.4" fill="none" stroke="#222" stroke-width="1.1"/><rect x="5.2" y="8.6" width="28" height="19.6" fill="#757575"/><rect x="5.4" y="9.2" width="27.4" height="3" fill="#b4b4b4"/><rect x="5.4" y="10.2" width="27.4" height="1" fill="#c8c8c8"/><path d="M5.4 13.4H15.5M25 13.4H33" fill="none" stroke="#2a2a2a" stroke-width="1" stroke-dasharray="1.1 0.9"/><path d="M16 13.4H24" fill="none" stroke="#666" stroke-width="1" stroke-dasharray="1.6 1"/><ellipse cx="25.6" cy="21.6" rx="6.6" ry="7" fill="url(#cck)"/><ellipse cx="19.6" cy="21.8" rx="7.8" ry="7" fill="#8a8a8a" stroke="#222" stroke-width="1" stroke-dasharray="1.6 1.4"/><ellipse cx="21.4" cy="22.3" rx="5.6" ry="6.9" fill="#bdbdbd" stroke="#999" stroke-width="0.8"/><path d="M21 19.2q-4.2 3.4 0 7.2q-1.2-1.8-1.2-3.6q0-1.8 1.2-3.6z" fill="#fff"/><circle cx="7.8" cy="19" r="2" fill="#444"/><path d="M9.4 17.6a2.4 2.4 0 0 1 -0.6 3.6" fill="none" stroke="#bbb" stroke-width="0.9"/></svg><span class="t" style="left:15px;top:389px;width:64px">!Snapper<svg width="64" height="16" fill="#fff"><use href="#g21"/><use href="#g53" x="8"/><use href="#g6e" x="16"/><use href="#g61" x="24"/><use href="#g70" x="32"/><use href="#g70" x="40"/><use href="#g65" x="48"/><use href="#g72" x="56"/></svg></span><svg style="left:30px;top:414px" width="34" height="29" viewBox="0 0 34 29" shape-rendering="crispEdges"><path d="M7 0h8v1h1v2h1v1h14v4h3v21H3v-1H2v-1H1v-1H0V5h1V4h4V3h1V1h1z" fill="#000"/><path d="M7 1h8v2h1v2h14v3H3v19H2v-1H1V5h5V3h1z" fill="#2bf"/><rect x="4" y="9" width="29" height="19" fill="#2ae"/><rect x="4" y="13" width="29" height="1" fill="#049"/><rect x="4" y="14" width="29" height="1" fill="#2bf"/></svg><span class="t" style="left:27px;top:447px;width:40px">RPCL4<svg width="40" height="16" fill="#fff"><use href="#g52"/><use href="#g50" x="8"/><use href="#g43" x="16"/><use href="#g4c" x="24"/><use href="#g34" x="32"/></svg></span><svg style="left:30px;top:469px" width="34" height="31" viewBox="0 0 34 31" shape-rendering="crispEdges"><path d="M17 0.5L34 22.5V30H30V22z" fill="#999"/><path d="M14.5 0h2.5L29.5 22H0.5z" fill="#eea"/><rect x="0" y="22" width="30" height="2" fill="#999"/><rect x="0" y="24" width="30" height="6" fill="#eea"/><path d="M14.6 6h2.8v9h1.6v2.6h-1.6V20h-2.8v-2.4H9V15.2zM14.6 9.6L11.6 15h3z" fill="#c00"/></svg><span class="t" style="left:19px;top:505px;width:56px">!Server<svg width="56" height="16" fill="#fff"><use href="#g21"/><use href="#g53" x="8"/><use href="#g65" x="16"/><use href="#g72" x="24"/><use href="#g76" x="32"/><use href="#g65" x="40"/><use href="#g72" x="48"/></svg></span><svg style="left:30px;top:529px" width="34" height="30" viewBox="0 0 34 30" shape-rendering="crispEdges"><path d="M6 0h10v2h1v2h12v2h1v2h3v2h1v20H2v-2H1v-2H0V6h1V4h4V2h1z" fill="#000"/><path d="M7 2h8v2h1v2h12v2H4v18H3v-2H2V6h4V4h1z" fill="#2bf"/><rect x="6" y="10" width="26" height="18" fill="#2ae"/><rect x="6" y="14" width="26" height="2" fill="#037"/><rect x="6" y="16" width="26" height="1" fill="#2bf"/></svg><span class="t" style="left:15px;top:563px;width:64px">OpenHGen<svg width="64" height="16" fill="#fff"><use href="#g4f"/><use href="#g70" x="8"/><use href="#g65" x="16"/><use href="#g6e" x="24"/><use href="#g48" x="32"/><use href="#g47" x="40"/><use href="#g65" x="48"/><use href="#g6e" x="56"/></svg></span><svg style="left:30px;top:587px" width="34" height="30" viewBox="0 0 34 30" shape-rendering="crispEdges"><path d="M6 0h10v2h1v2h12v2h1v2h3v2h1v20H2v-2H1v-2H0V6h1V4h4V2h1z" fill="#000"/><path d="M7 2h8v2h1v2h12v2H4v18H3v-2H2V6h4V4h1z" fill="#2bf"/><rect x="6" y="10" width="26" height="18" fill="#2ae"/><rect x="6" y="14" width="26" height="2" fill="#037"/><rect x="6" y="16" width="26" height="1" fill="#2bf"/></svg><span class="t" style="left:11px;top:621px;width:72px">OpenRPCL4<svg width="72" height="16" fill="#fff"><use href="#g4f"/><use href="#g70" x="8"/><use href="#g65" x="16"/><use href="#g6e" x="24"/><use href="#g52" x="32"/><use href="#g50" x="40"/><use href="#g43" x="48"/><use href="#g4c" x="56"/><use href="#g34" x="64"/></svg></span><svg style="left:30px;top:646px" width="34" height="29" viewBox="0 0 34 29" shape-rendering="crispEdges"><path d="M7 0h8v1h1v2h1v1h14v4h3v21H3v-1H2v-1H1v-1H0V5h1V4h4V3h1V1h1z" fill="#000"/><path d="M7 1h8v2h1v2h14v3H3v19H2v-1H1V5h5V3h1z" fill="#2bf"/><rect x="4" y="9" width="29" height="19" fill="#2ae"/><rect x="4" y="13" width="29" height="1" fill="#049"/><rect x="4" y="14" width="29" height="1" fill="#2bf"/></svg><span class="t" style="left:19px;top:679px;width:56px">HTMLGen<svg width="56" height="16" fill="#fff"><use href="#g48"/><use href="#g54" x="8"/><use href="#g4d" x="16"/><use href="#g4c" x="24"/><use href="#g47" x="32"/><use href="#g65" x="40"/><use href="#g6e" x="48"/></svg></span><svg style="left:30px;top:703px" width="34" height="30" viewBox="0 0 34 30" shape-rendering="crispEdges"><path d="M6 0h10v2h1v2h12v2h1v2h3v2h1v20H2v-2H1v-2H0V6h1V4h4V2h1z" fill="#000"/><path d="M7 2h8v2h1v2h12v2H4v18H3v-2H2V6h4V4h1z" fill="#2bf"/><rect x="6" y="10" width="26" height="18" fill="#2ae"/><rect x="6" y="14" width="26" height="2" fill="#037"/><rect x="6" y="16" width="26" height="1" fill="#2bf"/></svg><span class="t" style="left:19px;top:737px;width:56px">OpenHD4<svg width="56" height="16" fill="#fff"><use href="#g4f"/><use href="#g70" x="8"/><use href="#g65" x="16"/><use href="#g6e" x="24"/><use href="#g48" x="32"/><use href="#g44" x="40"/><use href="#g34" x="48"/></svg></span><svg style="left:30px;top:757px" width="34" height="34" viewBox="0 0 34 34"><defs><linearGradient id="gg" x1="0.15" y1="0.1" x2="0.6" y2="0.75"><stop offset="0" stop-color="#b4f0f0"/><stop offset="0.75" stop-color="#6fd6e2"/><stop offset="1" stop-color="#3cbde8"/></linearGradient><clipPath id="gc"><circle cx="17" cy="17" r="16.3"/></clipPath></defs><circle cx="17" cy="17" r="16.3" fill="#2ae"/><path clip-path="url(#gc)" d="M0 0H34V6.5Q20 13 15 21Q9 25.5 0 26z" fill="url(#gg)"/><circle cx="17" cy="17" r="16.3" fill="none" stroke="#000" stroke-width="1.1"/><path d="M7.6 4V20Q8 24 10 26" fill="none" stroke="#000" stroke-width="1.1" stroke-dasharray="2.4 3.2"/><path d="M8 25.6Q18 26.6 28 22" fill="none" stroke="#000" stroke-width="1.1" stroke-dasharray="2.2 3.4"/><path d="M11 26.5L16 32" fill="none" stroke="#000" stroke-width="1.1" stroke-dasharray="1.8 3.4"/><path d="M28.9 11.7L25.8 12.1L26.6 15.1L24.1 13.2L22.5 15.9L22.1 12.8L19.1 13.6L21.0 11.1L18.3 9.5L21.4 9.1L20.6 6.1L23.1 8.0L24.7 5.3L25.1 8.4L28.1 7.6L26.2 10.1z" fill="#fff"/></svg><span class="t" style="left:15px;top:795px;width:64px">!NetSurf<svg width="64" height="16" fill="#fff"><use href="#g21"/><use href="#g4e" x="8"/><use href="#g65" x="16"/><use href="#g74" x="24"/><use href="#g53" x="32"/><use href="#g75" x="40"/><use href="#g72" x="48"/><use href="#g66" x="56"/></svg></span><svg style="left:29px;top:813px" width="37" height="38" viewBox="0 0 37 38" shape-rendering="crispEdges"><path d="M0 4H8V2H15V0H22V2H30V9.5L36 19.8L26 31.5H0z" fill="#fff"/><rect x="4" y="31" width="21" height="7" fill="#fff"/><path d="M0 4h9v2H2v24h24v2H0z" fill="#000"/><rect x="7" y="2" width="2" height="15" fill="#000"/><rect x="14" y="0" width="2" height="19" fill="#000"/><rect x="21" y="0" width="2" height="13" fill="#000"/><rect x="28" y="2" width="2" height="8" fill="#000"/><rect x="9" y="2" width="5" height="1.5" fill="#333"/><rect x="16" y="0" width="5" height="1.5" fill="#333"/><rect x="23" y="2" width="5" height="1.5" fill="#333"/><rect x="0" y="16" width="15" height="2" fill="#000"/><rect x="13" y="27" width="2" height="4" fill="#000"/><rect x="4" y="32" width="2" height="6" fill="#000"/><rect x="23" y="32" width="2" height="6" fill="#000"/></svg><svg style="left:29px;top:813px" width="37" height="38" viewBox="0 0 37 38"><path d="M15.5 15.5L29 9.8L35.4 19.8L25.6 31" fill="none" stroke="#000" stroke-width="2" stroke-linejoin="miter"/><path d="M15.6 17.6L19.6 20.8L27.6 16.8" fill="none" stroke="#000" stroke-width="2"/></svg><span class="t" style="left:11px;top:855px;width:72px">!StrongED<svg width="72" height="16" fill="#fff"><use href="#g21"/><use href="#g53" x="8"/><use href="#g74" x="16"/><use href="#g72" x="24"/><use href="#g6f" x="32"/><use href="#g6e" x="40"/><use href="#g67" x="48"/><use href="#g45" x="56"/><use href="#g44" x="64"/></svg></span><svg style="left:30px;top:873px" width="34" height="34" viewBox="0 0 34 34" shape-rendering="crispEdges"><rect x="0" y="0" width="34" height="34" fill="#000"/><rect x="1" y="1" width="32" height="32" fill="#048"/><path d="M1 33L31 2.8V33z" fill="#fff"/><path d="M20 16.6L29 8V17.6z" fill="#c00"/><path d="M4 33L17.4 19H26.4L29 20.2V33z" fill="#ee2"/><rect x="1" y="7" width="13" height="2" fill="#2bf"/></svg><svg style="left:30px;top:873px" width="34" height="34" viewBox="0 0 34 34"><path d="M3.4 2.4L11.7 13.4M11.7 2.4L3.4 13.4" fill="none" stroke="#2bf" stroke-width="1.9"/></svg><span class="t" style="left:15px;top:911px;width:64px">!HTMLGen<svg width="64" height="16" fill="#fff"><use href="#g21"/><use href="#g48" x="8"/><use href="#g54" x="16"/><use href="#g4d" x="24"/><use href="#g4c" x="32"/><use href="#g47" x="40"/><use href="#g65" x="48"/><use href="#g6e" x="56"/></svg></span><div class="win" style="left:315px;top:149px;width:522px;height:402px;z-index:1"><div class="tb" style="left:1px;top:1px"><svg style="left:0px;top:0px" width="19" height="19" viewBox="0 0 19 19" shape-rendering="crispEdges"><rect x="2" y="2" width="11" height="11" fill="#000"/><rect x="3" y="3" width="9" height="9" fill="#555"/><rect x="6" y="6" width="11" height="11" fill="#000"/><rect x="7" y="7" width="9" height="9" fill="#bbb"/></svg></div><div class="tb" style="left:21px;top:1px"><svg style="left:0px;top:0px" width="19" height="19" viewBox="0 0 19 19"><path d="M6.1 6.1L13.9 13.9M13.9 6.1L6.1 13.9" fill="none" stroke="#000" stroke-width="6.2" stroke-linecap="round"/><path d="M6.1 6.1L13.9 13.9M13.9 6.1L6.1 13.9" fill="none" stroke="#bbb" stroke-width="4.2" stroke-linecap="round"/></svg></div><div class="tbar" style="left:41px;top:1px;width:460px"><span class="t" style="left:162px;top:2px;width:136px">net::Kingston1A.&amp;<svg width="136" height="16" fill="#000"><use href="#g6e"/><use href="#g65" x="8"/><use href="#g74" x="16"/><use href="#g3a" x="24"/><use href="#g3a" x="32"/><use href="#g4b" x="40"/><use href="#g69" x="48"/><use href="#g6e" x="56"/><use href="#g67" x="64"/><use href="#g73" x="72"/><use href="#g74" x="80"/><use href="#g6f" x="88"/><use href="#g6e" x="96"/><use href="#g31" x="104"/><use href="#g41" x="112"/><use href="#g2e" x="120"/><use href="#g26" x="128"/></svg></span></div><div class="tb" style="left:502px;top:1px"><svg style="left:0px;top:0px" width="19" height="19" viewBox="0 0 19 19" shape-rendering="crispEdges"><rect x="2" y="2" width="6" height="6" fill="#000"/><rect x="3" y="3" width="4" height="4" fill="#ccc"/><rect x="7" y="7" width="10" height="10" fill="#000"/><rect x="8" y="8" width="8" height="8" fill="#555"/></svg></div><div class="tb" style="left:502px;top:21px"><svg style="left:0px;top:0px" width="19" height="19" viewBox="0 0 19 19"><path d="M9.5 2.9L16.1 9.5H12.5V16.5H6.5V9.5H2.9z" fill="#bbb" stroke="#000" stroke-width="1.25" stroke-linejoin="miter"/></svg></div><div class="well" style="left:502px;top:41px;height:320px"><div class="sl" style="top:1px;height:154px"></div></div><div class="tb" style="left:502px;top:362px"><svg style="left:0px;top:0px" width="19" height="19" viewBox="0 0 19 19"><path d="M9.5 16.3L16.1 9.6H12.5V2.6H6.5V9.6H2.9z" fill="#bbb" stroke="#000" stroke-width="1.25" stroke-linejoin="miter"/></svg></div><div class="tb" style="left:502px;top:382px"><svg style="left:0px;top:0px" width="19" height="19" viewBox="0 0 19 19" shape-rendering="crispEdges"><rect x="3" y="2" width="13" height="15" fill="#000"/><rect x="4" y="3" width="11" height="13" fill="#bbb"/><rect x="4" y="9" width="6" height="1" fill="#000"/><rect x="9" y="3" width="1" height="6" fill="#000"/></svg></div><div class="wc" style="width:500px;height:380px"><svg class="tx" style="left:0px;top:0px" width="500" height="380"><rect width="500" height="380" fill="url(#tx)"/></svg><svg style="left:4px;top:10px" width="18" height="14" viewBox="0 0 18 14" shape-rendering="crispEdges"><path d="M4 0h5v1h1v1h6v1h1v1h1v10H2v-1H1v-1H0V3h1V2h2V1h1z" fill="#000"/><path d="M4 1h5v2h7v1H2v8H1V3h3z" fill="#2bf"/><rect x="3" y="5" width="14" height="8" fill="#2ae"/><rect x="3" y="5" width="14" height="2" fill="#2bf"/><rect x="3" y="7" width="14" height="1" fill="#049"/></svg><span class="t" style="left:25px;top:7px;width:32px">2019<svg width="32" height="16" fill="#000"><use href="#g32"/><use href="#g30" x="8"/><use href="#g31" x="16"/><use href="#g39" x="24"/></svg></span><span class="t" style="left:120px;top:7px;width:8px">/<svg width="8" height="16" fill="#000"><use href="#g2f"/></svg></span><span class="t" style="left:224px;top:7px;width:72px">Directory<svg width="72" height="16" fill="#000"><use href="#g44"/><use href="#g69" x="8"/><use href="#g72" x="16"/><use href="#g65" x="24"/><use href="#g63" x="32"/><use href="#g74" x="40"/><use href="#g6f" x="48"/><use href="#g72" x="56"/><use href="#g79" x="64"/></svg></span><span class="t" style="left:320px;top:7px;width:136px">00000000 00000000<svg width="136" height="16" fill="#000"><use href="#g30"/><use href="#g30" x="8"/><use href="#g30" x="16"/><use href="#g30" x="24"/><use href="#g30" x="32"/><use href="#g30" x="40"/><use href="#g30" x="48"/><use href="#g30" x="56"/><use href="#g30" x="72"/><use href="#g30" x="80"/><use href="#g30" x="88"/><use href="#g30" x="96"/><use href="#g30" x="104"/><use href="#g30" x="112"/><use href="#g30" x="120"/><use href="#g30" x="128"/></svg></span><svg style="left:4px;top:32px" width="18" height="14" viewBox="0 0 18 14" shape-rendering="crispEdges"><path d="M4 0h5v1h1v1h6v1h1v1h1v10H2v-1H1v-1H0V3h1V2h2V1h1z" fill="#000"/><path d="M4 1h5v2h7v1H2v8H1V3h3z" fill="#2bf"/><rect x="3" y="5" width="14" height="8" fill="#2ae"/><rect x="3" y="5" width="14" height="2" fill="#2bf"/><rect x="3" y="7" width="14" height="1" fill="#049"/></svg><span class="t" style="left:25px;top:29px;width:32px">2020<svg width="32" height="16" fill="#000"><use href="#g32"/><use href="#g30" x="8"/><use href="#g32" x="16"/><use href="#g30" x="24"/></svg></span><span class="t" style="left:120px;top:29px;width:16px">L/<svg width="16" height="16" fill="#000"><use href="#g4c"/><use href="#g2f" x="8"/></svg></span><span class="t" style="left:224px;top:29px;width:72px">Directory<svg width="72" height="16" fill="#000"><use href="#g44"/><use href="#g69" x="8"/><use href="#g72" x="16"/><use href="#g65" x="24"/><use href="#g63" x="32"/><use href="#g74" x="40"/><use href="#g6f" x="48"/><use href="#g72" x="56"/><use href="#g79" x="64"/></svg></span><span class="t" style="left:320px;top:29px;width:136px">00000000 00000000<svg width="136" height="16" fill="#000"><use href="#g30"/><use href="#g30" x="8"/><use href="#g30" x="16"/><use href="#g30" x="24"/><use href="#g30" x="32"/><use href="#g30" x="40"/><use href="#g30" x="48"/><use href="#g30" x="56"/><use href="#g30" x="72"/><use href="#g30" x="80"/><use href="#g30" x="88"/><use href="#g30" x="96"/><use href="#g30" x="104"/><use href="#g30" x="112"/><use href="#g30" x="120"/><use href="#g30" x="128"/></svg></span><svg style="left:4px;top:54px" width="18" height="14" viewBox="0 0 18 14" shape-rendering="crispEdges"><path d="M4 0h5v1h1v1h6v1h1v1h1v10H2v-1H1v-1H0V3h1V2h2V1h1z" fill="#000"/><path d="M4 1h5v2h7v1H2v8H1V3h3z" fill="#2bf"/><rect x="3" y="5" width="14" height="8" fill="#2ae"/><rect x="3" y="5" width="14" height="2" fill="#2bf"/><rect x="3" y="7" width="14" height="1" fill="#049"/></svg><span class="t" style="left:25px;top:51px;width:32px">2021<svg width="32" height="16" fill="#000"><use href="#g32"/><use href="#g30" x="8"/><use href="#g32" x="16"/><use href="#g31" x="24"/></svg></span><span class="t" style="left:120px;top:51px;width:16px">L/<svg width="16" height="16" fill="#000"><use href="#g4c"/><use href="#g2f" x="8"/></svg></span><span class="t" style="left:224px;top:51px;width:72px">Directory<svg width="72" height="16" fill="#000"><use href="#g44"/><use href="#g69" x="8"/><use href="#g72" x="16"/><use href="#g65" x="24"/><use href="#g63" x="32"/><use href="#g74" x="40"/><use href="#g6f" x="48"/><use href="#g72" x="56"/><use href="#g79" x="64"/></svg></span><span class="t" style="left:320px;top:51px;width:136px">00000000 00000000<svg width="136" height="16" fill="#000"><use href="#g30"/><use href="#g30" x="8"/><use href="#g30" x="16"/><use href="#g30" x="24"/><use href="#g30" x="32"/><use href="#g30" x="40"/><use href="#g30" x="48"/><use href="#g30" x="56"/><use href="#g30" x="72"/><use href="#g30" x="80"/><use href="#g30" x="88"/><use href="#g30" x="96"/><use href="#g30" x="104"/><use href="#g30" x="112"/><use href="#g30" x="120"/><use href="#g30" x="128"/></svg></span><svg style="left:4px;top:76px" width="18" height="14" viewBox="0 0 18 14" shape-rendering="crispEdges"><path d="M4 0h5v1h1v1h6v1h1v1h1v10H2v-1H1v-1H0V3h1V2h2V1h1z" fill="#000"/><path d="M4 1h5v2h7v1H2v8H1V3h3z" fill="#2bf"/><rect x="3" y="5" width="14" height="8" fill="#2ae"/><rect x="3" y="5" width="14" height="2" fill="#2bf"/><rect x="3" y="7" width="14" height="1" fill="#049"/></svg><span class="t" style="left:25px;top:73px;width:32px">2022<svg width="32" height="16" fill="#000"><use href="#g32"/><use href="#g30" x="8"/><use href="#g32" x="16"/><use href="#g32" x="24"/></svg></span><span class="t" style="left:120px;top:73px;width:16px">L/<svg width="16" height="16" fill="#000"><use href="#g4c"/><use href="#g2f" x="8"/></svg></span><span class="t" style="left:224px;top:73px;width:72px">Directory<svg width="72" height="16" fill="#000"><use href="#g44"/><use href="#g69" x="8"/><use href="#g72" x="16"/><use href="#g65" x="24"/><use href="#g63" x="32"/><use href="#g74" x="40"/><use href="#g6f" x="48"/><use href="#g72" x="56"/><use href="#g79" x="64"/></svg></span><span class="t" style="left:320px;top:73px;width:136px">00000000 00000000<svg width="136" height="16" fill="#000"><use href="#g30"/><use href="#g30" x="8"/><use href="#g30" x="16"/><use href="#g30" x="24"/><use href="#g30" x="32"/><use href="#g30" x="40"/><use href="#g30" x="48"/><use href="#g30" x="56"/><use href="#g30" x="72"/><use href="#g30" x="80"/><use href="#g30" x="88"/><use href="#g30" x="96"/><use href="#g30" x="104"/><use href="#g30" x="112"/><use href="#g30" x="120"/><use href="#g30" x="128"/></svg></span><svg style="left:4px;top:98px" width="18" height="14" viewBox="0 0 18 14" shape-rendering="crispEdges"><path d="M4 0h5v1h1v1h6v1h1v1h1v10H2v-1H1v-1H0V3h1V2h2V1h1z" fill="#000"/><path d="M4 1h5v2h7v1H2v8H1V3h3z" fill="#2bf"/><rect x="3" y="5" width="14" height="8" fill="#2ae"/><rect x="3" y="5" width="14" height="2" fill="#2bf"/><rect x="3" y="7" width="14" height="1" fill="#049"/></svg><span class="t" style="left:25px;top:95px;width:32px">2023<svg width="32" height="16" fill="#000"><use href="#g32"/><use href="#g30" x="8"/><use href="#g32" x="16"/><use href="#g33" x="24"/></svg></span><span class="t" style="left:120px;top:95px;width:16px">L/<svg width="16" height="16" fill="#000"><use href="#g4c"/><use href="#g2f" x="8"/></svg></span><span class="t" style="left:224px;top:95px;width:72px">Directory<svg width="72" height="16" fill="#000"><use href="#g44"/><use href="#g69" x="8"/><use href="#g72" x="16"/><use href="#g65" x="24"/><use href="#g63" x="32"/><use href="#g74" x="40"/><use href="#g6f" x="48"/><use href="#g72" x="56"/><use href="#g79" x="64"/></svg></span><span class="t" style="left:320px;top:95px;width:136px">00000000 00000000<svg width="136" height="16" fill="#000"><use href="#g30"/><use href="#g30" x="8"/><use href="#g30" x="16"/><use href="#g30" x="24"/><use href="#g30" x="32"/><use href="#g30" x="40"/><use href="#g30" x="48"/><use href="#g30" x="56"/><use href="#g30" x="72"/><use href="#g30" x="80"/><use href="#g30" x="88"/><use href="#g30" x="96"/><use href="#g30" x="104"/><use href="#g30" x="112"/><use href="#g30" x="120"/><use href="#g30" x="128"/></svg></span><svg style="left:4px;top:120px" width="18" height="14" viewBox="0 0 18 14" shape-rendering="crispEdges"><path d="M4 0h5v1h1v1h6v1h1v1h1v10H2v-1H1v-1H0V3h1V2h2V1h1z" fill="#000"/><path d="M4 1h5v2h7v1H2v8H1V3h3z" fill="#2bf"/><rect x="3" y="5" width="14" height="8" fill="#2ae"/><rect x="3" y="5" width="14" height="2" fill="#2bf"/><rect x="3" y="7" width="14" height="1" fill="#049"/></svg><span class="t" style="left:25px;top:117px;width:56px">Amnesia<svg width="56" height="16" fill="#000"><use href="#g41"/><use href="#g6d" x="8"/><use href="#g6e" x="16"/><use href="#g65" x="24"/><use href="#g73" x="32"/><use href="#g69" x="40"/><use href="#g61" x="48"/></svg></span><span class="t" style="left:120px;top:117px;width:16px">L/<svg width="16" height="16" fill="#000"><use href="#g4c"/><use href="#g2f" x="8"/></svg></span><span class="t" style="left:224px;top:117px;width:72px">Directory<svg width="72" height="16" fill="#000"><use href="#g44"/><use href="#g69" x="8"/><use href="#g72" x="16"/><use href="#g65" x="24"/><use href="#g63" x="32"/><use href="#g74" x="40"/><use href="#g6f" x="48"/><use href="#g72" x="56"/><use href="#g79" x="64"/></svg></span><span class="t" style="left:320px;top:117px;width:136px">00000000 00000000<svg width="136" height="16" fill="#000"><use href="#g30"/><use href="#g30" x="8"/><use href="#g30" x="16"/><use href="#g30" x="24"/><use href="#g30" x="32"/><use href="#g30" x="40"/><use href="#g30" x="48"/><use href="#g30" x="56"/><use href="#g30" x="72"/><use href="#g30" x="80"/><use href="#g30" x="88"/><use href="#g30" x="96"/><use href="#g30" x="104"/><use href="#g30" x="112"/><use href="#g30" x="120"/><use href="#g30" x="128"/></svg></span><svg style="left:4px;top:142px" width="18" height="14" viewBox="0 0 18 14" shape-rendering="crispEdges"><path d="M4 0h5v1h1v1h6v1h1v1h1v10H2v-1H1v-1H0V3h1V2h2V1h1z" fill="#000"/><path d="M4 1h5v2h7v1H2v8H1V3h3z" fill="#2bf"/><rect x="3" y="5" width="14" height="8" fill="#2ae"/><rect x="3" y="5" width="14" height="2" fill="#2bf"/><rect x="3" y="7" width="14" height="1" fill="#049"/></svg><span class="t" style="left:25px;top:139px;width:40px">Ample<svg width="40" height="16" fill="#000"><use href="#g41"/><use href="#g6d" x="8"/><use href="#g70" x="16"/><use href="#g6c" x="24"/><use href="#g65" x="32"/></svg></span><span class="t" style="left:120px;top:139px;width:16px">L/<svg width="16" height="16" fill="#000"><use href="#g4c"/><use href="#g2f" x="8"/></svg></span><span class="t" style="left:224px;top:139px;width:72px">Directory<svg width="72" height="16" fill="#000"><use href="#g44"/><use href="#g69" x="8"/><use href="#g72" x="16"/><use href="#g65" x="24"/><use href="#g63" x="32"/><use href="#g74" x="40"/><use href="#g6f" x="48"/><use href="#g72" x="56"/><use href="#g79" x="64"/></svg></span><span class="t" style="left:320px;top:139px;width:136px">00000000 00000000<svg width="136" height="16" fill="#000"><use href="#g30"/><use href="#g30" x="8"/><use href="#g30" x="16"/><use href="#g30" x="24"/><use href="#g30" x="32"/><use href="#g30" x="40"/><use href="#g30" x="48"/><use href="#g30" x="56"/><use href="#g30" x="72"/><use href="#g30" x="80"/><use href="#g30" x="88"/><use href="#g30" x="96"/><use href="#g30" x="104"/><use href="#g30" x="112"/><use href="#g30" x="120"/><use href="#g30" x="128"/></svg></span><svg style="left:4px;top:164px" width="18" height="14" viewBox="0 0 18 14" shape-rendering="crispEdges"><path d="M4 0h5v1h1v1h6v1h1v1h1v10H2v-1H1v-1H0V3h1V2h2V1h1z" fill="#000"/><path d="M4 1h5v2h7v1H2v8H1V3h3z" fill="#2bf"/><rect x="3" y="5" width="14" height="8" fill="#2ae"/><rect x="3" y="5" width="14" height="2" fill="#2bf"/><rect x="3" y="7" width="14" height="1" fill="#049"/></svg><span class="t" style="left:25px;top:161px;width:56px">ANFS418<svg width="56" height="16" fill="#000"><use href="#g41"/><use href="#g4e" x="8"/><use href="#g46" x="16"/><use href="#g53" x="24"/><use href="#g34" x="32"/><use href="#g31" x="40"/><use href="#g38" x="48"/></svg></span><span class="t" style="left:120px;top:161px;width:16px">L/<svg width="16" height="16" fill="#000"><use href="#g4c"/><use href="#g2f" x="8"/></svg></span><span class="t" style="left:224px;top:161px;width:72px">Directory<svg width="72" height="16" fill="#000"><use href="#g44"/><use href="#g69" x="8"/><use href="#g72" x="16"/><use href="#g65" x="24"/><use href="#g63" x="32"/><use href="#g74" x="40"/><use href="#g6f" x="48"/><use href="#g72" x="56"/><use href="#g79" x="64"/></svg></span><span class="t" style="left:320px;top:161px;width:136px">00000000 00000000<svg width="136" height="16" fill="#000"><use href="#g30"/><use href="#g30" x="8"/><use href="#g30" x="16"/><use href="#g30" x="24"/><use href="#g30" x="32"/><use href="#g30" x="40"/><use href="#g30" x="48"/><use href="#g30" x="56"/><use href="#g30" x="72"/><use href="#g30" x="80"/><use href="#g30" x="88"/><use href="#g30" x="96"/><use href="#g30" x="104"/><use href="#g30" x="112"/><use href="#g30" x="120"/><use href="#g30" x="128"/></svg></span><svg style="left:4px;top:186px" width="18" height="14" viewBox="0 0 18 14" shape-rendering="crispEdges"><path d="M4 0h5v1h1v1h6v1h1v1h1v10H2v-1H1v-1H0V3h1V2h2V1h1z" fill="#000"/><path d="M4 1h5v2h7v1H2v8H1V3h3z" fill="#2bf"/><rect x="3" y="5" width="14" height="8" fill="#2ae"/><rect x="3" y="5" width="14" height="2" fill="#2bf"/><rect x="3" y="7" width="14" height="1" fill="#049"/></svg><span class="t" style="left:25px;top:183px;width:40px">Arena<svg width="40" height="16" fill="#000"><use href="#g41"/><use href="#g72" x="8"/><use href="#g65" x="16"/><use href="#g6e" x="24"/><use href="#g61" x="32"/></svg></span><span class="t" style="left:120px;top:183px;width:16px">L/<svg width="16" height="16" fill="#000"><use href="#g4c"/><use href="#g2f" x="8"/></svg></span><span class="t" style="left:224px;top:183px;width:72px">Directory<svg width="72" height="16" fill="#000"><use href="#g44"/><use href="#g69" x="8"/><use href="#g72" x="16"/><use href="#g65" x="24"/><use href="#g63" x="32"/><use href="#g74" x="40"/><use href="#g6f" x="48"/><use href="#g72" x="56"/><use href="#g79" x="64"/></svg></span><span class="t" style="left:320px;top:183px;width:136px">00000000 00000000<svg width="136" height="16" fill="#000"><use href="#g30"/><use href="#g30" x="8"/><use href="#g30" x="16"/><use href="#g30" x="24"/><use href="#g30" x="32"/><use href="#g30" x="40"/><use href="#g30" x="48"/><use href="#g30" x="56"/><use href="#g30" x="72"/><use href="#g30" x="80"/><use href="#g30" x="88"/><use href="#g30" x="96"/><use href="#g30" x="104"/><use href="#g30" x="112"/><use href="#g30" x="120"/><use href="#g30" x="128"/></svg></span><svg style="left:4px;top:208px" width="18" height="14" viewBox="0 0 18 14" shape-rendering="crispEdges"><path d="M4 0h5v1h1v1h6v1h1v1h1v10H2v-1H1v-1H0V3h1V2h2V1h1z" fill="#000"/><path d="M4 1h5v2h7v1H2v8H1V3h3z" fill="#2bf"/><rect x="3" y="5" width="14" height="8" fill="#2ae"/><rect x="3" y="5" width="14" height="2" fill="#2bf"/><rect x="3" y="7" width="14" height="1" fill="#049"/></svg><span class="t" style="left:25px;top:205px;width:56px">ARMApps<svg width="56" height="16" fill="#000"><use href="#g41"/><use href="#g52" x="8"/><use href="#g4d" x="16"/><use href="#g41" x="24"/><use href="#g70" x="32"/><use href="#g70" x="40"/><use href="#g73" x="48"/></svg></span><span class="t" style="left:120px;top:205px;width:8px">/<svg width="8" height="16" fill="#000"><use href="#g2f"/></svg></span><span class="t" style="left:224px;top:205px;width:72px">Directory<svg width="72" height="16" fill="#000"><use href="#g44"/><use href="#g69" x="8"/><use href="#g72" x="16"/><use href="#g65" x="24"/><use href="#g63" x="32"/><use href="#g74" x="40"/><use href="#g6f" x="48"/><use href="#g72" x="56"/><use href="#g79" x="64"/></svg></span><span class="t" style="left:320px;top:205px;width:136px">00000000 00000000<svg width="136" height="16" fill="#000"><use href="#g30"/><use href="#g30" x="8"/><use href="#g30" x="16"/><use href="#g30" x="24"/><use href="#g30" x="32"/><use href="#g30" x="40"/><use href="#g30" x="48"/><use href="#g30" x="56"/><use href="#g30" x="72"/><use href="#g30" x="80"/><use href="#g30" x="88"/><use href="#g30" x="96"/><use href="#g30" x="104"/><use href="#g30" x="112"/><use href="#g30" x="120"/><use href="#g30" x="128"/></svg></span><svg style="left:4px;top:230px" width="18" height="14" viewBox="0 0 18 14" shape-rendering="crispEdges"><path d="M4 0h5v1h1v1h6v1h1v1h1v10H2v-1H1v-1H0V3h1V2h2V1h1z" fill="#000"/><path d="M4 1h5v2h7v1H2v8H1V3h3z" fill="#2bf"/><rect x="3" y="5" width="14" height="8" fill="#2ae"/><rect x="3" y="5" width="14" height="2" fill="#2bf"/><rect x="3" y="7" width="14" height="1" fill="#049"/></svg><span class="t" style="left:25px;top:227px;width:72px">ArthurLib<svg width="72" height="16" fill="#000"><use href="#g41"/><use href="#g72" x="8"/><use href="#g74" x="16"/><use href="#g68" x="24"/><use href="#g75" x="32"/><use href="#g72" x="40"/><use href="#g4c" x="48"/><use href="#g69" x="56"/><use href="#g62" x="64"/></svg></span><span class="t" style="left:120px;top:227px;width:16px">L/<svg width="16" height="16" fill="#000"><use href="#g4c"/><use href="#g2f" x="8"/></svg></span><span class="t" style="left:224px;top:227px;width:72px">Directory<svg width="72" height="16" fill="#000"><use href="#g44"/><use href="#g69" x="8"/><use href="#g72" x="16"/><use href="#g65" x="24"/><use href="#g63" x="32"/><use href="#g74" x="40"/><use href="#g6f" x="48"/><use href="#g72" x="56"/><use href="#g79" x="64"/></svg></span><span class="t" style="left:320px;top:227px;width:136px">00000000 00000000<svg width="136" height="16" fill="#000"><use href="#g30"/><use href="#g30" x="8"/><use href="#g30" x="16"/><use href="#g30" x="24"/><use href="#g30" x="32"/><use href="#g30" x="40"/><use href="#g30" x="48"/><use href="#g30" x="56"/><use href="#g30" x="72"/><use href="#g30" x="80"/><use href="#g30" x="88"/><use href="#g30" x="96"/><use href="#g30" x="104"/><use href="#g30" x="112"/><use href="#g30" x="120"/><use href="#g30" x="128"/></svg></span><svg style="left:4px;top:252px" width="18" height="14" viewBox="0 0 18 14" shape-rendering="crispEdges"><path d="M4 0h5v1h1v1h6v1h1v1h1v10H2v-1H1v-1H0V3h1V2h2V1h1z" fill="#000"/><path d="M4 1h5v2h7v1H2v8H1V3h3z" fill="#2bf"/><rect x="3" y="5" width="14" height="8" fill="#2ae"/><rect x="3" y="5" width="14" height="2" fill="#2bf"/><rect x="3" y="7" width="14" height="1" fill="#049"/></svg><span class="t" style="left:25px;top:249px;width:32px">BOOT<svg width="32" height="16" fill="#000"><use href="#g42"/><use href="#g4f" x="8"/><use href="#g4f" x="16"/><use href="#g54" x="24"/></svg></span><span class="t" style="left:120px;top:249px;width:16px">L/<svg width="16" height="16" fill="#000"><use href="#g4c"/><use href="#g2f" x="8"/></svg></span><span class="t" style="left:224px;top:249px;width:72px">Directory<svg width="72" height="16" fill="#000"><use href="#g44"/><use href="#g69" x="8"/><use href="#g72" x="16"/><use href="#g65" x="24"/><use href="#g63" x="32"/><use href="#g74" x="40"/><use href="#g6f" x="48"/><use href="#g72" x="56"/><use href="#g79" x="64"/></svg></span><span class="t" style="left:320px;top:249px;width:136px">00000000 00000000<svg width="136" height="16" fill="#000"><use href="#g30"/><use href="#g30" x="8"/><use href="#g30" x="16"/><use href="#g30" x="24"/><use href="#g30" x="32"/><use href="#g30" x="40"/><use href="#g30" x="48"/><use href="#g30" x="56"/><use href="#g30" x="72"/><use href="#g30" x="80"/><use href="#g30" x="88"/><use href="#g30" x="96"/><use href="#g30" x="104"/><use href="#g30" x="112"/><use href="#g30" x="120"/><use href="#g30" x="128"/></svg></span><svg style="left:4px;top:274px" width="18" height="14" viewBox="0 0 18 14" shape-rendering="crispEdges"><path d="M4 0h5v1h1v1h6v1h1v1h1v10H2v-1H1v-1H0V3h1V2h2V1h1z" fill="#000"/><path d="M4 1h5v2h7v1H2v8H1V3h3z" fill="#2bf"/><rect x="3" y="5" width="14" height="8" fill="#2ae"/><rect x="3" y="5" width="14" height="2" fill="#2bf"/><rect x="3" y="7" width="14" height="1" fill="#049"/></svg><span class="t" style="left:25px;top:271px;width:32px">Cave<svg width="32" height="16" fill="#000"><use href="#g43"/><use href="#g61" x="8"/><use href="#g76" x="16"/><use href="#g65" x="24"/></svg></span><span class="t" style="left:120px;top:271px;width:16px">L/<svg width="16" height="16" fill="#000"><use href="#g4c"/><use href="#g2f" x="8"/></svg></span><span class="t" style="left:224px;top:271px;width:72px">Directory<svg width="72" height="16" fill="#000"><use href="#g44"/><use href="#g69" x="8"/><use href="#g72" x="16"/><use href="#g65" x="24"/><use href="#g63" x="32"/><use href="#g74" x="40"/><use href="#g6f" x="48"/><use href="#g72" x="56"/><use href="#g79" x="64"/></svg></span><span class="t" style="left:320px;top:271px;width:136px">00000000 00000000<svg width="136" height="16" fill="#000"><use href="#g30"/><use href="#g30" x="8"/><use href="#g30" x="16"/><use href="#g30" x="24"/><use href="#g30" x="32"/><use href="#g30" x="40"/><use href="#g30" x="48"/><use href="#g30" x="56"/><use href="#g30" x="72"/><use href="#g30" x="80"/><use href="#g30" x="88"/><use href="#g30" x="96"/><use href="#g30" x="104"/><use href="#g30" x="112"/><use href="#g30" x="120"/><use href="#g30" x="128"/></svg></span><svg style="left:4px;top:296px" width="18" height="14" viewBox="0 0 18 14" shape-rendering="crispEdges"><path d="M4 0h5v1h1v1h6v1h1v1h1v10H2v-1H1v-1H0V3h1V2h2V1h1z" fill="#000"/><path d="M4 1h5v2h7v1H2v8H1V3h3z" fill="#2bf"/><rect x="3" y="5" width="14" height="8" fill="#2ae"/><rect x="3" y="5" width="14" height="2" fill="#2bf"/><rect x="3" y="7" width="14" height="1" fill="#049"/></svg><span class="t" style="left:25px;top:293px;width:72px">DataMerge<svg width="72" height="16" fill="#000"><use href="#g44"/><use href="#g61" x="8"/><use href="#g74" x="16"/><use href="#g61" x="24"/><use href="#g4d" x="32"/><use href="#g65" x="40"/><use href="#g72" x="48"/><use href="#g67" x="56"/><use href="#g65" x="64"/></svg></span><span class="t" style="left:120px;top:293px;width:16px">L/<svg width="16" height="16" fill="#000"><use href="#g4c"/><use href="#g2f" x="8"/></svg></span><span class="t" style="left:224px;top:293px;width:72px">Directory<svg width="72" height="16" fill="#000"><use href="#g44"/><use href="#g69" x="8"/><use href="#g72" x="16"/><use href="#g65" x="24"/><use href="#g63" x="32"/><use href="#g74" x="40"/><use href="#g6f" x="48"/><use href="#g72" x="56"/><use href="#g79" x="64"/></svg></span><span class="t" style="left:320px;top:293px;width:136px">00000000 00000000<svg width="136" height="16" fill="#000"><use href="#g30"/><use href="#g30" x="8"/><use href="#g30" x="16"/><use href="#g30" x="24"/><use href="#g30" x="32"/><use href="#g30" x="40"/><use href="#g30" x="48"/><use href="#g30" x="56"/><use href="#g30" x="72"/><use href="#g30" x="80"/><use href="#g30" x="88"/><use href="#g30" x="96"/><use href="#g30" x="104"/><use href="#g30" x="112"/><use href="#g30" x="120"/><use href="#g30" x="128"/></svg></span><svg style="left:4px;top:318px" width="18" height="14" viewBox="0 0 18 14" shape-rendering="crispEdges"><path d="M4 0h5v1h1v1h6v1h1v1h1v10H2v-1H1v-1H0V3h1V2h2V1h1z" fill="#000"/><path d="M4 1h5v2h7v1H2v8H1V3h3z" fill="#2bf"/><rect x="3" y="5" width="14" height="8" fill="#2ae"/><rect x="3" y="5" width="14" height="2" fill="#2bf"/><rect x="3" y="7" width="14" height="1" fill="#049"/></svg><span class="t" style="left:25px;top:315px;width:64px">Domesday<svg width="64" height="16" fill="#000"><use href="#g44"/><use href="#g6f" x="8"/><use href="#g6d" x="16"/><use href="#g65" x="24"/><use href="#g73" x="32"/><use href="#g64" x="40"/><use href="#g61" x="48"/><use href="#g79" x="56"/></svg></span><span class="t" style="left:120px;top:315px;width:16px">L/<svg width="16" height="16" fill="#000"><use href="#g4c"/><use href="#g2f" x="8"/></svg></span><span class="t" style="left:224px;top:315px;width:72px">Directory<svg width="72" height="16" fill="#000"><use href="#g44"/><use href="#g69" x="8"/><use href="#g72" x="16"/><use href="#g65" x="24"/><use href="#g63" x="32"/><use href="#g74" x="40"/><use href="#g6f" x="48"/><use href="#g72" x="56"/><use href="#g79" x="64"/></svg></span><span class="t" style="left:320px;top:315px;width:136px">00000000 00000000<svg width="136" height="16" fill="#000"><use href="#g30"/><use href="#g30" x="8"/><use href="#g30" x="16"/><use href="#g30" x="24"/><use href="#g30" x="32"/><use href="#g30" x="40"/><use href="#g30" x="48"/><use href="#g30" x="56"/><use href="#g30" x="72"/><use href="#g30" x="80"/><use href="#g30" x="88"/><use href="#g30" x="96"/><use href="#g30" x="104"/><use href="#g30" x="112"/><use href="#g30" x="120"/><use href="#g30" x="128"/></svg></span><svg style="left:4px;top:340px" width="18" height="14" viewBox="0 0 18 14" shape-rendering="crispEdges"><path d="M4 0h5v1h1v1h6v1h1v1h1v10H2v-1H1v-1H0V3h1V2h2V1h1z" fill="#000"/><path d="M4 1h5v2h7v1H2v8H1V3h3z" fill="#2bf"/><rect x="3" y="5" width="14" height="8" fill="#2ae"/><rect x="3" y="5" width="14" height="2" fill="#2bf"/><rect x="3" y="7" width="14" height="1" fill="#049"/></svg><span class="t" style="left:25px;top:337px;width:40px">Elite<svg width="40" height="16" fill="#000"><use href="#g45"/><use href="#g6c" x="8"/><use href="#g69" x="16"/><use href="#g74" x="24"/><use href="#g65" x="32"/></svg></span><span class="t" style="left:120px;top:337px;width:8px">/<svg width="8" height="16" fill="#000"><use href="#g2f"/></svg></span><span class="t" style="left:224px;top:337px;width:72px">Directory<svg width="72" height="16" fill="#000"><use href="#g44"/><use href="#g69" x="8"/><use href="#g72" x="16"/><use href="#g65" x="24"/><use href="#g63" x="32"/><use href="#g74" x="40"/><use href="#g6f" x="48"/><use href="#g72" x="56"/><use href="#g79" x="64"/></svg></span><span class="t" style="left:320px;top:337px;width:136px">00000000 00000000<svg width="136" height="16" fill="#000"><use href="#g30"/><use href="#g30" x="8"/><use href="#g30" x="16"/><use href="#g30" x="24"/><use href="#g30" x="32"/><use href="#g30" x="40"/><use href="#g30" x="48"/><use href="#g30" x="56"/><use href="#g30" x="72"/><use href="#g30" x="80"/><use href="#g30" x="88"/><use href="#g30" x="96"/><use href="#g30" x="104"/><use href="#g30" x="112"/><use href="#g30" x="120"/><use href="#g30" x="128"/></svg></span><svg style="left:4px;top:362px" width="18" height="14" viewBox="0 0 18 14" shape-rendering="crispEdges"><path d="M4 0h5v1h1v1h6v1h1v1h1v10H2v-1H1v-1H0V3h1V2h2V1h1z" fill="#000"/><path d="M4 1h5v2h7v1H2v8H1V3h3z" fill="#2bf"/><rect x="3" y="5" width="14" height="8" fill="#2ae"/><rect x="3" y="5" width="14" height="2" fill="#2bf"/><rect x="3" y="7" width="14" height="1" fill="#049"/></svg><span class="t" style="left:25px;top:359px;width:40px">Games<svg width="40" height="16" fill="#000"><use href="#g47"/><use href="#g61" x="8"/><use href="#g6d" x="16"/><use href="#g65" x="24"/><use href="#g73" x="32"/></svg></span><span class="t" style="left:120px;top:359px;width:16px">L/<svg width="16" height="16" fill="#000"><use href="#g4c"/><use href="#g2f" x="8"/></svg></span><span class="t" style="left:224px;top:359px;width:72px">Directory<svg width="72" height="16" fill="#000"><use href="#g44"/><use href="#g69" x="8"/><use href="#g72" x="16"/><use href="#g65" x="24"/><use href="#g63" x="32"/><use href="#g74" x="40"/><use href="#g6f" x="48"/><use href="#g72" x="56"/><use href="#g79" x="64"/></svg></span><span class="t" style="left:320px;top:359px;width:136px">00000000 00000000<svg width="136" height="16" fill="#000"><use href="#g30"/><use href="#g30" x="8"/><use href="#g30" x="16"/><use href="#g30" x="24"/><use href="#g30" x="32"/><use href="#g30" x="40"/><use href="#g30" x="48"/><use href="#g30" x="56"/><use href="#g30" x="72"/><use href="#g30" x="80"/><use href="#g30" x="88"/><use href="#g30" x="96"/><use href="#g30" x="104"/><use href="#g30" x="112"/><use href="#g30" x="120"/><use href="#g30" x="128"/></svg></span></div></div><div class="win" style="left:85px;top:541px;width:400px;height:162px;z-index:2"><div class="tb" style="left:1px;top:1px"><svg style="left:0px;top:0px" width="19" height="19" viewBox="0 0 19 19" shape-rendering="crispEdges"><rect x="2" y="2" width="11" height="11" fill="#000"/><rect x="3" y="3" width="9" height="9" fill="#555"/><rect x="6" y="6" width="11" height="11" fill="#000"/><rect x="7" y="7" width="9" height="9" fill="#bbb"/></svg></div><div class="tb" style="left:21px;top:1px"><svg style="left:0px;top:0px" width="19" height="19" viewBox="0 0 19 19"><path d="M6.1 6.1L13.9 13.9M13.9 6.1L6.1 13.9" fill="none" stroke="#000" stroke-width="6.2" stroke-linecap="round"/><path d="M6.1 6.1L13.9 13.9M13.9 6.1L6.1 13.9" fill="none" stroke="#bbb" stroke-width="4.2" stroke-linecap="round"/></svg></div><div class="tbar" style="left:41px;top:1px;width:338px"><span class="t" style="left:89px;top:2px;width:160px">List of file servers<svg width="160" height="16" fill="#000"><use href="#g4c"/><use href="#g69" x="8"/><use href="#g73" x="16"/><use href="#g74" x="24"/><use href="#g6f" x="40"/><use href="#g66" x="48"/><use href="#g66" x="64"/><use href="#g69" x="72"/><use href="#g6c" x="80"/><use href="#g65" x="88"/><use href="#g73" x="104"/><use href="#g65" x="112"/><use href="#g72" x="120"/><use href="#g76" x="128"/><use href="#g65" x="136"/><use href="#g72" x="144"/><use href="#g73" x="152"/></svg></span></div><div class="tb" style="left:380px;top:1px"><svg style="left:0px;top:0px" width="19" height="19" viewBox="0 0 19 19" shape-rendering="crispEdges"><rect x="2" y="2" width="6" height="6" fill="#000"/><rect x="3" y="3" width="4" height="4" fill="#ccc"/><rect x="7" y="7" width="10" height="10" fill="#000"/><rect x="8" y="8" width="8" height="8" fill="#555"/></svg></div><div class="tb" style="left:380px;top:21px"><svg style="left:0px;top:0px" width="19" height="19" viewBox="0 0 19 19"><path d="M9.5 2.9L16.1 9.5H12.5V16.5H6.5V9.5H2.9z" fill="#bbb" stroke="#000" stroke-width="1.25" stroke-linejoin="miter"/></svg></div><div class="well" style="left:380px;top:41px;height:80px"><div class="sl" style="top:1px;height:76px"></div></div><div class="tb" style="left:380px;top:122px"><svg style="left:0px;top:0px" width="19" height="19" viewBox="0 0 19 19"><path d="M9.5 16.3L16.1 9.6H12.5V2.6H6.5V9.6H2.9z" fill="#bbb" stroke="#000" stroke-width="1.25" stroke-linejoin="miter"/></svg></div><div class="tb" style="left:380px;top:142px"><svg style="left:0px;top:0px" width="19" height="19" viewBox="0 0 19 19" shape-rendering="crispEdges"><rect x="3" y="2" width="13" height="15" fill="#000"/><rect x="4" y="3" width="11" height="13" fill="#bbb"/><rect x="4" y="9" width="6" height="1" fill="#000"/><rect x="9" y="3" width="1" height="6" fill="#000"/></svg></div><div class="wc" style="width:378px;height:140px"><svg class="tx" style="left:0px;top:0px" width="378" height="140"><rect width="378" height="140" fill="url(#tx)"/></svg><svg style="left:45px;top:10px" width="46" height="34" viewBox="0 0 46 34" shape-rendering="crispEdges"><rect x="2" y="0" width="17" height="15" fill="#555"/><rect x="3" y="1" width="15" height="13" fill="#eea"/><rect x="4" y="2" width="13" height="9" fill="#999"/><rect x="4" y="11" width="13" height="2" fill="#bbb"/><rect x="6" y="4" width="10" height="7" fill="#666"/><rect x="7" y="5" width="8" height="5" fill="#ddd"/><rect x="14" y="13" width="2" height="1" fill="#0c0"/><rect x="3" y="15" width="2" height="1" fill="#222"/><rect x="16" y="15" width="2" height="1" fill="#222"/><rect x="0" y="16" width="21" height="7" fill="#555"/><rect x="1" y="17" width="19" height="5" fill="#eea"/><rect x="1" y="18" width="19" height="2" fill="#bbb"/><rect x="13" y="18" width="4" height="1" fill="#000"/><path d="M2 22h21v4h1v4h1v4H0v-4h1v-4h1z" fill="#555"/><path d="M3 23h19v4h1v4h1v2H1v-2h1v-4h1z" fill="#eea"/><rect x="4" y="25" width="2" height="1" fill="#555"/><rect x="7" y="25" width="2" height="1" fill="#555"/><rect x="10" y="25" width="2" height="1" fill="#555"/><rect x="13" y="25" width="2" height="1" fill="#555"/><rect x="16" y="25" width="3" height="1" fill="#555"/><path d="M4 27h10v5H2v-1h1v-2h1z" fill="#777"/><rect x="13" y="27" width="1" height="1" fill="#333"/><rect x="13" y="30" width="1" height="2" fill="#333"/><rect x="3" y="30" width="1" height="1" fill="#333"/><rect x="15" y="27" width="3" height="2" fill="#444"/><path d="M16 30h1v1h1v1h-3v-1h1z" fill="#333"/><path d="M19 27h3v4h1v1h-4z" fill="#777"/><rect x="21" y="29" width="1" height="2" fill="#444"/><path d="M27 1.5H22" fill="none" stroke="#444" stroke-width="1"/><path d="M22 1V8H24V18H21" fill="none" stroke="#000" stroke-width="2"/><rect x="27" y="0" width="19" height="8" fill="#555"/><rect x="28" y="1" width="17" height="6" fill="#eea"/><rect x="28" y="2" width="17" height="2" fill="#bbb"/><rect x="38" y="2" width="4" height="1" fill="#000"/><path d="M28 7h17v4h1v5H27v-5h1z" fill="#555"/><path d="M29 8h15v4h1v3H28v-3h1z" fill="#eea"/><rect x="30" y="9" width="8" height="1" fill="#444"/><rect x="30" y="10" width="9" height="4" fill="#777"/><rect x="29" y="12" width="1" height="2" fill="#444"/><rect x="38" y="11" width="1" height="3" fill="#444"/><rect x="39" y="9" width="2" height="5" fill="#444"/><rect x="42" y="9" width="2" height="5" fill="#444"/><rect x="39" y="11" width="2" height="1" fill="#999"/><rect x="42" y="11" width="2" height="1" fill="#999"/></svg><span class="t" style="left:52px;top:50px;width:32px">BML4<svg width="32" height="16" fill="#000"><use href="#g42"/><use href="#g4d" x="8"/><use href="#g4c" x="16"/><use href="#g34" x="24"/></svg></span><svg style="left:181px;top:10px" width="46" height="34" viewBox="0 0 46 34" shape-rendering="crispEdges"><rect x="2" y="0" width="17" height="15" fill="#555"/><rect x="3" y="1" width="15" height="13" fill="#eea"/><rect x="4" y="2" width="13" height="9" fill="#999"/><rect x="4" y="11" width="13" height="2" fill="#bbb"/><rect x="6" y="4" width="10" height="7" fill="#666"/><rect x="7" y="5" width="8" height="5" fill="#ddd"/><rect x="14" y="13" width="2" height="1" fill="#0c0"/><rect x="3" y="15" width="2" height="1" fill="#222"/><rect x="16" y="15" width="2" height="1" fill="#222"/><rect x="0" y="16" width="21" height="7" fill="#555"/><rect x="1" y="17" width="19" height="5" fill="#eea"/><rect x="1" y="18" width="19" height="2" fill="#bbb"/><rect x="13" y="18" width="4" height="1" fill="#000"/><path d="M2 22h21v4h1v4h1v4H0v-4h1v-4h1z" fill="#555"/><path d="M3 23h19v4h1v4h1v2H1v-2h1v-4h1z" fill="#eea"/><rect x="4" y="25" width="2" height="1" fill="#555"/><rect x="7" y="25" width="2" height="1" fill="#555"/><rect x="10" y="25" width="2" height="1" fill="#555"/><rect x="13" y="25" width="2" height="1" fill="#555"/><rect x="16" y="25" width="3" height="1" fill="#555"/><path d="M4 27h10v5H2v-1h1v-2h1z" fill="#777"/><rect x="13" y="27" width="1" height="1" fill="#333"/><rect x="13" y="30" width="1" height="2" fill="#333"/><rect x="3" y="30" width="1" height="1" fill="#333"/><rect x="15" y="27" width="3" height="2" fill="#444"/><path d="M16 30h1v1h1v1h-3v-1h1z" fill="#333"/><path d="M19 27h3v4h1v1h-4z" fill="#777"/><rect x="21" y="29" width="1" height="2" fill="#444"/><path d="M27 1.5H22" fill="none" stroke="#444" stroke-width="1"/><path d="M22 1V8H24V18H21" fill="none" stroke="#000" stroke-width="2"/><rect x="27" y="0" width="19" height="8" fill="#555"/><rect x="28" y="1" width="17" height="6" fill="#eea"/><rect x="28" y="2" width="17" height="2" fill="#bbb"/><rect x="38" y="2" width="4" height="1" fill="#000"/><path d="M28 7h17v4h1v5H27v-5h1z" fill="#555"/><path d="M29 8h15v4h1v3H28v-3h1z" fill="#eea"/><rect x="30" y="9" width="8" height="1" fill="#444"/><rect x="30" y="10" width="9" height="4" fill="#777"/><rect x="29" y="12" width="1" height="2" fill="#444"/><rect x="38" y="11" width="1" height="3" fill="#444"/><rect x="39" y="9" width="2" height="5" fill="#444"/><rect x="42" y="9" width="2" height="5" fill="#444"/><rect x="39" y="11" width="2" height="1" fill="#999"/><rect x="42" y="11" width="2" height="1" fill="#999"/></svg><span class="t" style="left:164px;top:50px;width:80px">Kingston1A<svg width="80" height="16" fill="#000"><use href="#g4b"/><use href="#g69" x="8"/><use href="#g6e" x="16"/><use href="#g67" x="24"/><use href="#g73" x="32"/><use href="#g74" x="40"/><use href="#g6f" x="48"/><use href="#g6e" x="56"/><use href="#g31" x="64"/><use href="#g41" x="72"/></svg></span><svg style="left:317px;top:10px" width="46" height="34" viewBox="0 0 46 34" shape-rendering="crispEdges"><rect x="2" y="0" width="17" height="15" fill="#555"/><rect x="3" y="1" width="15" height="13" fill="#eea"/><rect x="4" y="2" width="13" height="9" fill="#999"/><rect x="4" y="11" width="13" height="2" fill="#bbb"/><rect x="6" y="4" width="10" height="7" fill="#666"/><rect x="7" y="5" width="8" height="5" fill="#ddd"/><rect x="14" y="13" width="2" height="1" fill="#0c0"/><rect x="3" y="15" width="2" height="1" fill="#222"/><rect x="16" y="15" width="2" height="1" fill="#222"/><rect x="0" y="16" width="21" height="7" fill="#555"/><rect x="1" y="17" width="19" height="5" fill="#eea"/><rect x="1" y="18" width="19" height="2" fill="#bbb"/><rect x="13" y="18" width="4" height="1" fill="#000"/><path d="M2 22h21v4h1v4h1v4H0v-4h1v-4h1z" fill="#555"/><path d="M3 23h19v4h1v4h1v2H1v-2h1v-4h1z" fill="#eea"/><rect x="4" y="25" width="2" height="1" fill="#555"/><rect x="7" y="25" width="2" height="1" fill="#555"/><rect x="10" y="25" width="2" height="1" fill="#555"/><rect x="13" y="25" width="2" height="1" fill="#555"/><rect x="16" y="25" width="3" height="1" fill="#555"/><path d="M4 27h10v5H2v-1h1v-2h1z" fill="#777"/><rect x="13" y="27" width="1" height="1" fill="#333"/><rect x="13" y="30" width="1" height="2" fill="#333"/><rect x="3" y="30" width="1" height="1" fill="#333"/><rect x="15" y="27" width="3" height="2" fill="#444"/><path d="M16 30h1v1h1v1h-3v-1h1z" fill="#333"/><path d="M19 27h3v4h1v1h-4z" fill="#777"/><rect x="21" y="29" width="1" height="2" fill="#444"/><path d="M27 1.5H22" fill="none" stroke="#444" stroke-width="1"/><path d="M22 1V8H24V18H21" fill="none" stroke="#000" stroke-width="2"/><rect x="27" y="0" width="19" height="8" fill="#555"/><rect x="28" y="1" width="17" height="6" fill="#eea"/><rect x="28" y="2" width="17" height="2" fill="#bbb"/><rect x="38" y="2" width="4" height="1" fill="#000"/><path d="M28 7h17v4h1v5H27v-5h1z" fill="#555"/><path d="M29 8h15v4h1v3H28v-3h1z" fill="#eea"/><rect x="30" y="9" width="8" height="1" fill="#444"/><rect x="30" y="10" width="9" height="4" fill="#777"/><rect x="29" y="12" width="1" height="2" fill="#444"/><rect x="38" y="11" width="1" height="3" fill="#444"/><rect x="39" y="9" width="2" height="5" fill="#444"/><rect x="42" y="9" width="2" height="5" fill="#444"/><rect x="39" y="11" width="2" height="1" fill="#999"/><rect x="42" y="11" width="2" height="1" fill="#999"/></svg><span class="t" style="left:300px;top:50px;width:80px">KINGSTON1B<svg width="80" height="16" fill="#000"><use href="#g4b"/><use href="#g49" x="8"/><use href="#g4e" x="16"/><use href="#g47" x="24"/><use href="#g53" x="32"/><use href="#g54" x="40"/><use href="#g4f" x="48"/><use href="#g4e" x="56"/><use href="#g31" x="64"/><use href="#g42" x="72"/></svg></span><svg style="left:45px;top:80px" width="46" height="34" viewBox="0 0 46 34" shape-rendering="crispEdges"><rect x="2" y="0" width="17" height="15" fill="#555"/><rect x="3" y="1" width="15" height="13" fill="#eea"/><rect x="4" y="2" width="13" height="9" fill="#999"/><rect x="4" y="11" width="13" height="2" fill="#bbb"/><rect x="6" y="4" width="10" height="7" fill="#666"/><rect x="7" y="5" width="8" height="5" fill="#ddd"/><rect x="14" y="13" width="2" height="1" fill="#0c0"/><rect x="3" y="15" width="2" height="1" fill="#222"/><rect x="16" y="15" width="2" height="1" fill="#222"/><rect x="0" y="16" width="21" height="7" fill="#555"/><rect x="1" y="17" width="19" height="5" fill="#eea"/><rect x="1" y="18" width="19" height="2" fill="#bbb"/><rect x="13" y="18" width="4" height="1" fill="#000"/><path d="M2 22h21v4h1v4h1v4H0v-4h1v-4h1z" fill="#555"/><path d="M3 23h19v4h1v4h1v2H1v-2h1v-4h1z" fill="#eea"/><rect x="4" y="25" width="2" height="1" fill="#555"/><rect x="7" y="25" width="2" height="1" fill="#555"/><rect x="10" y="25" width="2" height="1" fill="#555"/><rect x="13" y="25" width="2" height="1" fill="#555"/><rect x="16" y="25" width="3" height="1" fill="#555"/><path d="M4 27h10v5H2v-1h1v-2h1z" fill="#777"/><rect x="13" y="27" width="1" height="1" fill="#333"/><rect x="13" y="30" width="1" height="2" fill="#333"/><rect x="3" y="30" width="1" height="1" fill="#333"/><rect x="15" y="27" width="3" height="2" fill="#444"/><path d="M16 30h1v1h1v1h-3v-1h1z" fill="#333"/><path d="M19 27h3v4h1v1h-4z" fill="#777"/><rect x="21" y="29" width="1" height="2" fill="#444"/><path d="M27 1.5H22" fill="none" stroke="#444" stroke-width="1"/><path d="M22 1V8H24V18H21" fill="none" stroke="#000" stroke-width="2"/><rect x="27" y="0" width="19" height="8" fill="#555"/><rect x="28" y="1" width="17" height="6" fill="#eea"/><rect x="28" y="2" width="17" height="2" fill="#bbb"/><rect x="38" y="2" width="4" height="1" fill="#000"/><path d="M28 7h17v4h1v5H27v-5h1z" fill="#555"/><path d="M29 8h15v4h1v3H28v-3h1z" fill="#eea"/><rect x="30" y="9" width="8" height="1" fill="#444"/><rect x="30" y="10" width="9" height="4" fill="#777"/><rect x="29" y="12" width="1" height="2" fill="#444"/><rect x="38" y="11" width="1" height="3" fill="#444"/><rect x="39" y="9" width="2" height="5" fill="#444"/><rect x="42" y="9" width="2" height="5" fill="#444"/><rect x="39" y="11" width="2" height="1" fill="#999"/><rect x="42" y="11" width="2" height="1" fill="#999"/></svg><span class="t" style="left:32px;top:120px;width:72px">Kingston3<svg width="72" height="16" fill="#000"><use href="#g4b"/><use href="#g69" x="8"/><use href="#g6e" x="16"/><use href="#g67" x="24"/><use href="#g73" x="32"/><use href="#g74" x="40"/><use href="#g6f" x="48"/><use href="#g6e" x="56"/><use href="#g33" x="64"/></svg></span><svg style="left:181px;top:80px" width="46" height="34" viewBox="0 0 46 34" shape-rendering="crispEdges"><rect x="2" y="0" width="17" height="15" fill="#555"/><rect x="3" y="1" width="15" height="13" fill="#eea"/><rect x="4" y="2" width="13" height="9" fill="#999"/><rect x="4" y="11" width="13" height="2" fill="#bbb"/><rect x="6" y="4" width="10" height="7" fill="#666"/><rect x="7" y="5" width="8" height="5" fill="#ddd"/><rect x="14" y="13" width="2" height="1" fill="#0c0"/><rect x="3" y="15" width="2" height="1" fill="#222"/><rect x="16" y="15" width="2" height="1" fill="#222"/><rect x="0" y="16" width="21" height="7" fill="#555"/><rect x="1" y="17" width="19" height="5" fill="#eea"/><rect x="1" y="18" width="19" height="2" fill="#bbb"/><rect x="13" y="18" width="4" height="1" fill="#000"/><path d="M2 22h21v4h1v4h1v4H0v-4h1v-4h1z" fill="#555"/><path d="M3 23h19v4h1v4h1v2H1v-2h1v-4h1z" fill="#eea"/><rect x="4" y="25" width="2" height="1" fill="#555"/><rect x="7" y="25" width="2" height="1" fill="#555"/><rect x="10" y="25" width="2" height="1" fill="#555"/><rect x="13" y="25" width="2" height="1" fill="#555"/><rect x="16" y="25" width="3" height="1" fill="#555"/><path d="M4 27h10v5H2v-1h1v-2h1z" fill="#777"/><rect x="13" y="27" width="1" height="1" fill="#333"/><rect x="13" y="30" width="1" height="2" fill="#333"/><rect x="3" y="30" width="1" height="1" fill="#333"/><rect x="15" y="27" width="3" height="2" fill="#444"/><path d="M16 30h1v1h1v1h-3v-1h1z" fill="#333"/><path d="M19 27h3v4h1v1h-4z" fill="#777"/><rect x="21" y="29" width="1" height="2" fill="#444"/><path d="M27 1.5H22" fill="none" stroke="#444" stroke-width="1"/><path d="M22 1V8H24V18H21" fill="none" stroke="#000" stroke-width="2"/><rect x="27" y="0" width="19" height="8" fill="#555"/><rect x="28" y="1" width="17" height="6" fill="#eea"/><rect x="28" y="2" width="17" height="2" fill="#bbb"/><rect x="38" y="2" width="4" height="1" fill="#000"/><path d="M28 7h17v4h1v5H27v-5h1z" fill="#555"/><path d="M29 8h15v4h1v3H28v-3h1z" fill="#eea"/><rect x="30" y="9" width="8" height="1" fill="#444"/><rect x="30" y="10" width="9" height="4" fill="#777"/><rect x="29" y="12" width="1" height="2" fill="#444"/><rect x="38" y="11" width="1" height="3" fill="#444"/><rect x="39" y="9" width="2" height="5" fill="#444"/><rect x="42" y="9" width="2" height="5" fill="#444"/><rect x="39" y="11" width="2" height="1" fill="#999"/><rect x="42" y="11" width="2" height="1" fill="#999"/></svg><span class="t" style="left:168px;top:120px;width:72px">Kingston4<svg width="72" height="16" fill="#000"><use href="#g4b"/><use href="#g69" x="8"/><use href="#g6e" x="16"/><use href="#g67" x="24"/><use href="#g73" x="32"/><use href="#g74" x="40"/><use href="#g6f" x="48"/><use href="#g6e" x="56"/><use href="#g34" x="64"/></svg></span><svg style="left:317px;top:80px" width="46" height="34" viewBox="0 0 46 34" shape-rendering="crispEdges"><rect x="2" y="0" width="17" height="15" fill="#555"/><rect x="3" y="1" width="15" height="13" fill="#eea"/><rect x="4" y="2" width="13" height="9" fill="#999"/><rect x="4" y="11" width="13" height="2" fill="#bbb"/><rect x="6" y="4" width="10" height="7" fill="#666"/><rect x="7" y="5" width="8" height="5" fill="#ddd"/><rect x="14" y="13" width="2" height="1" fill="#0c0"/><rect x="3" y="15" width="2" height="1" fill="#222"/><rect x="16" y="15" width="2" height="1" fill="#222"/><rect x="0" y="16" width="21" height="7" fill="#555"/><rect x="1" y="17" width="19" height="5" fill="#eea"/><rect x="1" y="18" width="19" height="2" fill="#bbb"/><rect x="13" y="18" width="4" height="1" fill="#000"/><path d="M2 22h21v4h1v4h1v4H0v-4h1v-4h1z" fill="#555"/><path d="M3 23h19v4h1v4h1v2H1v-2h1v-4h1z" fill="#eea"/><rect x="4" y="25" width="2" height="1" fill="#555"/><rect x="7" y="25" width="2" height="1" fill="#555"/><rect x="10" y="25" width="2" height="1" fill="#555"/><rect x="13" y="25" width="2" height="1" fill="#555"/><rect x="16" y="25" width="3" height="1" fill="#555"/><path d="M4 27h10v5H2v-1h1v-2h1z" fill="#777"/><rect x="13" y="27" width="1" height="1" fill="#333"/><rect x="13" y="30" width="1" height="2" fill="#333"/><rect x="3" y="30" width="1" height="1" fill="#333"/><rect x="15" y="27" width="3" height="2" fill="#444"/><path d="M16 30h1v1h1v1h-3v-1h1z" fill="#333"/><path d="M19 27h3v4h1v1h-4z" fill="#777"/><rect x="21" y="29" width="1" height="2" fill="#444"/><path d="M27 1.5H22" fill="none" stroke="#444" stroke-width="1"/><path d="M22 1V8H24V18H21" fill="none" stroke="#000" stroke-width="2"/><rect x="27" y="0" width="19" height="8" fill="#555"/><rect x="28" y="1" width="17" height="6" fill="#eea"/><rect x="28" y="2" width="17" height="2" fill="#bbb"/><rect x="38" y="2" width="4" height="1" fill="#000"/><path d="M28 7h17v4h1v5H27v-5h1z" fill="#555"/><path d="M29 8h15v4h1v3H28v-3h1z" fill="#eea"/><rect x="30" y="9" width="8" height="1" fill="#444"/><rect x="30" y="10" width="9" height="4" fill="#777"/><rect x="29" y="12" width="1" height="2" fill="#444"/><rect x="38" y="11" width="1" height="3" fill="#444"/><rect x="39" y="9" width="2" height="5" fill="#444"/><rect x="42" y="9" width="2" height="5" fill="#444"/><rect x="39" y="11" width="2" height="1" fill="#999"/><rect x="42" y="11" width="2" height="1" fill="#999"/></svg><span class="t" style="left:320px;top:120px;width:40px">RPCL4<svg width="40" height="16" fill="#000"><use href="#g52"/><use href="#g50" x="8"/><use href="#g43" x="16"/><use href="#g4c" x="24"/><use href="#g34" x="32"/></svg></span></div></div><div class="ibar"><svg class="tx" style="left:0px;top:0px" width="1278" height="65"><rect width="1278" height="65" fill="url(#tx)"/></svg><svg style="left:21px;top:24px" width="48" height="20" viewBox="0 0 48 20" shape-rendering="crispEdges"><rect x="0" y="0" width="48" height="20" fill="#555"/><rect x="1" y="1" width="46" height="18" fill="#eea"/><rect x="3" y="3" width="1" height="14" fill="#000"/><rect x="6" y="3" width="1" height="14" fill="#000"/><rect x="9" y="3" width="1" height="14" fill="#000"/><rect x="12" y="3" width="1" height="14" fill="#000"/><rect x="15" y="3" width="1" height="14" fill="#000"/><rect x="18" y="3" width="1" height="14" fill="#000"/><rect x="21" y="3" width="1" height="14" fill="#000"/><rect x="37" y="8" width="5" height="3" fill="#d00"/></svg><span class="t" style="left:9px;top:46px;width:72px">HardDisc4<svg width="72" height="16" fill="#000"><use href="#g48"/><use href="#g61" x="8"/><use href="#g72" x="16"/><use href="#g64" x="24"/><use href="#g44" x="32"/><use href="#g69" x="40"/><use href="#g73" x="48"/><use href="#g63" x="56"/><use href="#g34" x="64"/></svg></span><svg style="left:90px;top:24px" width="48" height="20" viewBox="0 0 48 20" shape-rendering="crispEdges"><rect x="0" y="0" width="48" height="16" fill="#555"/><rect x="1" y="1" width="46" height="14" fill="#eea"/><rect x="4" y="1" width="1" height="14" fill="#cc9"/><rect x="44" y="1" width="1" height="14" fill="#cc9"/><rect x="7" y="5" width="35" height="4" fill="#000"/><rect x="8" y="6" width="10" height="2" fill="#d00"/><rect x="18" y="6" width="13" height="2" fill="#fb0"/><rect x="31" y="6" width="10" height="2" fill="#d00"/><rect x="33" y="3" width="9" height="1" fill="#999"/><rect x="33" y="10" width="9" height="3" fill="#999"/><rect x="0" y="15" width="48" height="1" fill="#555"/><rect x="1" y="16" width="2" height="4" fill="#777"/><rect x="5" y="16" width="2" height="4" fill="#777"/><rect x="9" y="16" width="2" height="4" fill="#777"/><rect x="13" y="16" width="2" height="4" fill="#777"/><rect x="17" y="16" width="2" height="4" fill="#777"/><rect x="21" y="16" width="2" height="4" fill="#777"/><rect x="25" y="16" width="3" height="3" fill="#d00"/><rect x="29" y="15" width="15" height="5" fill="#888"/><rect x="31" y="16" width="11" height="2" fill="#000"/><rect x="45" y="16" width="2" height="4" fill="#777"/></svg><span class="t" style="left:106px;top:46px;width:16px">:0<svg width="16" height="16" fill="#000"><use href="#g3a"/><use href="#g30" x="8"/></svg></span><svg style="left:146px;top:15px" width="34" height="29" viewBox="0 0 34 29" shape-rendering="crispEdges"><path d="M6 0h10v1h1v3h14v1h1v3h2v21H3v-1H2v-1H1v-1H0V5h1V4h4V1h1z" fill="#777"/><path d="M6 1h10v4h15v3H3v18H2v-1H1V5h5z" fill="#eea"/><rect x="4" y="9" width="29" height="19" fill="#eea"/><path d="M5 10h7v12l-3.5 6L5 22z" fill="#000"/><rect x="6" y="11" width="5" height="11" fill="#2c2"/><rect x="8" y="11" width="1" height="11" fill="#ee2"/><path d="M6 22h5l-2.5 4z" fill="#fb0"/><path d="M13 15q0-5 8-5q-3 1-3.5 8h-4z" fill="#000"/><rect x="15" y="12" width="1" height="3" fill="#ddd"/><rect x="14" y="18" width="4" height="2" fill="#999"/><rect x="14" y="20" width="4" height="7" fill="#d00"/><rect x="14" y="20" width="2" height="1" fill="#000"/><rect x="16" y="21" width="2" height="1" fill="#000"/><rect x="14" y="22" width="2" height="1" fill="#000"/><rect x="16" y="23" width="2" height="1" fill="#000"/><rect x="14" y="24" width="2" height="1" fill="#000"/><rect x="16" y="25" width="2" height="1" fill="#000"/><rect x="14" y="26" width="2" height="1" fill="#000"/><path d="M19 14.5H26" fill="none" stroke="#999" stroke-width="1"/></svg><svg style="left:146px;top:15px" width="34" height="29" viewBox="0 0 34 29"><path d="M30 11L23.5 21" fill="none" stroke="#049" stroke-width="4.2"/><path d="M30.6 11.4L24.6 20.6" fill="none" stroke="#2ae" stroke-width="1.6"/><path d="M22 19.5l3.6 2.4L19 27z" fill="#fb0"/><path d="M22.6 23.6l1.6 1-1.4 1.2z" fill="#000"/></svg><span class="t" style="left:147px;top:46px;width:32px">Apps<svg width="32" height="16" fill="#000"><use href="#g41"/><use href="#g70" x="8"/><use href="#g70" x="16"/><use href="#g73" x="24"/></svg></span><svg style="left:188px;top:22px" width="43" height="22" viewBox="0 0 43 22" shape-rendering="crispEdges"><rect x="1" y="0" width="2" height="2" fill="#333"/><rect x="1" y="17" width="3" height="1" fill="#777"/><rect x="2" y="18" width="1" height="4" fill="#777"/><rect x="5" y="0" width="2" height="2" fill="#333"/><rect x="5" y="17" width="3" height="1" fill="#777"/><rect x="6" y="18" width="1" height="4" fill="#777"/><rect x="9" y="0" width="2" height="2" fill="#333"/><rect x="9" y="17" width="3" height="1" fill="#777"/><rect x="10" y="18" width="1" height="4" fill="#777"/><rect x="13" y="0" width="2" height="2" fill="#333"/><rect x="13" y="17" width="3" height="1" fill="#777"/><rect x="14" y="18" width="1" height="4" fill="#777"/><rect x="17" y="0" width="2" height="2" fill="#333"/><rect x="17" y="17" width="3" height="1" fill="#777"/><rect x="18" y="18" width="1" height="4" fill="#777"/><rect x="21" y="0" width="2" height="2" fill="#333"/><rect x="21" y="17" width="3" height="1" fill="#777"/><rect x="22" y="18" width="1" height="4" fill="#777"/><rect x="25" y="0" width="2" height="2" fill="#333"/><rect x="25" y="17" width="3" height="1" fill="#777"/><rect x="26" y="18" width="1" height="4" fill="#777"/><rect x="29" y="0" width="2" height="2" fill="#333"/><rect x="29" y="17" width="3" height="1" fill="#777"/><rect x="30" y="18" width="1" height="4" fill="#777"/><rect x="33" y="0" width="2" height="2" fill="#333"/><rect x="33" y="17" width="3" height="1" fill="#777"/><rect x="34" y="18" width="1" height="4" fill="#777"/><rect x="37" y="0" width="2" height="2" fill="#333"/><rect x="37" y="17" width="3" height="1" fill="#777"/><rect x="38" y="18" width="1" height="4" fill="#777"/><rect x="41" y="0" width="2" height="2" fill="#333"/><rect x="41" y="17" width="3" height="1" fill="#777"/><rect x="42" y="18" width="1" height="4" fill="#777"/><rect x="0" y="2" width="43" height="15" fill="#000"/><rect x="0" y="9" width="1" height="2" fill="#ddd"/><rect x="3" y="5" width="3" height="2" fill="#ddd"/><rect x="8" y="5" width="8" height="2" fill="#ddd"/><rect x="18" y="5" width="3" height="2" fill="#ddd"/><rect x="22" y="5" width="4" height="2" fill="#ddd"/><rect x="27" y="5" width="4" height="2" fill="#ddd"/><rect x="3" y="9" width="2" height="2" fill="#ddd"/><rect x="6" y="9" width="5" height="2" fill="#ddd"/><rect x="12" y="9" width="5" height="2" fill="#ddd"/><rect x="3" y="13" width="4" height="2" fill="#ddd"/><rect x="9" y="13" width="3" height="2" fill="#ddd"/><rect x="14" y="13" width="11" height="2" fill="#ddd"/></svg><span class="t" style="left:197px;top:46px;width:24px">RAM<svg width="24" height="16" fill="#000"><use href="#g52"/><use href="#g41" x="8"/><use href="#g4d" x="16"/></svg></span><svg style="left:244px;top:10px" width="46" height="34" viewBox="0 0 46 34" shape-rendering="crispEdges"><rect x="2" y="0" width="17" height="15" fill="#555"/><rect x="3" y="1" width="15" height="13" fill="#eea"/><rect x="4" y="2" width="13" height="10" fill="#999"/><rect x="4" y="12" width="13" height="2" fill="#bbb"/><rect x="3" y="15" width="2" height="1" fill="#222"/><rect x="16" y="15" width="2" height="1" fill="#222"/><rect x="0" y="16" width="21" height="7" fill="#555"/><rect x="1" y="17" width="19" height="5" fill="#eea"/><rect x="1" y="18" width="19" height="2" fill="#bbb"/><rect x="13" y="18" width="4" height="1" fill="#000"/><path d="M2 22h21v4h1v4h1v4H0v-4h1v-4h1z" fill="#555"/><path d="M3 23h19v4h1v4h1v2H1v-2h1v-4h1z" fill="#eea"/><rect x="4" y="25" width="2" height="1" fill="#555"/><rect x="7" y="25" width="2" height="1" fill="#555"/><rect x="10" y="25" width="2" height="1" fill="#555"/><rect x="13" y="25" width="2" height="1" fill="#555"/><rect x="16" y="25" width="3" height="1" fill="#555"/><path d="M4 27h10v5H2v-1h1v-2h1z" fill="#777"/><rect x="13" y="27" width="1" height="1" fill="#333"/><rect x="13" y="30" width="1" height="2" fill="#333"/><rect x="3" y="30" width="1" height="1" fill="#333"/><rect x="15" y="27" width="3" height="2" fill="#444"/><path d="M16 30h1v1h1v1h-3v-1h1z" fill="#333"/><path d="M19 27h3v4h1v1h-4z" fill="#777"/><rect x="21" y="29" width="1" height="2" fill="#444"/><path d="M31 2H23V8H26V18H21" fill="none" stroke="#222" stroke-width="2"/></svg><span class="t" style="left:240px;top:46px;width:40px">BMNFS<svg width="40" height="16" fill="#000"><use href="#g42"/><use href="#g4d" x="8"/><use href="#g4e" x="16"/><use href="#g46" x="24"/><use href="#g53" x="32"/></svg></span><svg style="left:290px;top:10px" width="46" height="34" viewBox="0 0 46 34" shape-rendering="crispEdges"><rect x="2" y="0" width="17" height="15" fill="#555"/><rect x="3" y="1" width="15" height="13" fill="#eea"/><rect x="4" y="2" width="13" height="10" fill="#999"/><rect x="4" y="12" width="13" height="2" fill="#bbb"/><rect x="3" y="15" width="2" height="1" fill="#222"/><rect x="16" y="15" width="2" height="1" fill="#222"/><rect x="0" y="16" width="21" height="7" fill="#555"/><rect x="1" y="17" width="19" height="5" fill="#eea"/><rect x="1" y="18" width="19" height="2" fill="#bbb"/><rect x="13" y="18" width="4" height="1" fill="#000"/><path d="M2 22h21v4h1v4h1v4H0v-4h1v-4h1z" fill="#555"/><path d="M3 23h19v4h1v4h1v2H1v-2h1v-4h1z" fill="#eea"/><rect x="4" y="25" width="2" height="1" fill="#555"/><rect x="7" y="25" width="2" height="1" fill="#555"/><rect x="10" y="25" width="2" height="1" fill="#555"/><rect x="13" y="25" width="2" height="1" fill="#555"/><rect x="16" y="25" width="3" height="1" fill="#555"/><path d="M4 27h10v5H2v-1h1v-2h1z" fill="#777"/><rect x="13" y="27" width="1" height="1" fill="#333"/><rect x="13" y="30" width="1" height="2" fill="#333"/><rect x="3" y="30" width="1" height="1" fill="#333"/><rect x="15" y="27" width="3" height="2" fill="#444"/><path d="M16 30h1v1h1v1h-3v-1h1z" fill="#333"/><path d="M19 27h3v4h1v1h-4z" fill="#777"/><rect x="21" y="29" width="1" height="2" fill="#444"/><path d="M31 2H23V8H26V18H21" fill="none" stroke="#222" stroke-width="2"/></svg><span class="t" style="left:290px;top:46px;width:32px">BML4<svg width="32" height="16" fill="#000"><use href="#g42"/><use href="#g4d" x="8"/><use href="#g4c" x="16"/><use href="#g34" x="24"/></svg></span><svg style="left:348px;top:10px" width="46" height="34" viewBox="0 0 46 34" shape-rendering="crispEdges"><rect x="2" y="0" width="17" height="15" fill="#555"/><rect x="3" y="1" width="15" height="13" fill="#eea"/><rect x="4" y="2" width="13" height="10" fill="#999"/><rect x="4" y="12" width="13" height="2" fill="#bbb"/><rect x="3" y="15" width="2" height="1" fill="#222"/><rect x="16" y="15" width="2" height="1" fill="#222"/><rect x="0" y="16" width="21" height="7" fill="#555"/><rect x="1" y="17" width="19" height="5" fill="#eea"/><rect x="1" y="18" width="19" height="2" fill="#bbb"/><rect x="13" y="18" width="4" height="1" fill="#000"/><path d="M2 22h21v4h1v4h1v4H0v-4h1v-4h1z" fill="#555"/><path d="M3 23h19v4h1v4h1v2H1v-2h1v-4h1z" fill="#eea"/><rect x="4" y="25" width="2" height="1" fill="#555"/><rect x="7" y="25" width="2" height="1" fill="#555"/><rect x="10" y="25" width="2" height="1" fill="#555"/><rect x="13" y="25" width="2" height="1" fill="#555"/><rect x="16" y="25" width="3" height="1" fill="#555"/><path d="M4 27h10v5H2v-1h1v-2h1z" fill="#777"/><rect x="13" y="27" width="1" height="1" fill="#333"/><rect x="13" y="30" width="1" height="2" fill="#333"/><rect x="3" y="30" width="1" height="1" fill="#333"/><rect x="15" y="27" width="3" height="2" fill="#444"/><path d="M16 30h1v1h1v1h-3v-1h1z" fill="#333"/><path d="M19 27h3v4h1v1h-4z" fill="#777"/><rect x="21" y="29" width="1" height="2" fill="#444"/><path d="M31 2H23V8H26V18H21" fill="none" stroke="#222" stroke-width="2"/></svg><span class="t" style="left:332px;top:46px;width:64px">BMECONET<svg width="64" height="16" fill="#000"><use href="#g42"/><use href="#g4d" x="8"/><use href="#g45" x="16"/><use href="#g43" x="24"/><use href="#g4f" x="32"/><use href="#g4e" x="40"/><use href="#g45" x="48"/><use href="#g54" x="56"/></svg></span><svg style="left:423px;top:10px" width="46" height="34" viewBox="0 0 46 34" shape-rendering="crispEdges"><rect x="2" y="0" width="17" height="15" fill="#555"/><rect x="3" y="1" width="15" height="13" fill="#eea"/><rect x="4" y="2" width="13" height="9" fill="#999"/><rect x="4" y="11" width="13" height="2" fill="#bbb"/><rect x="6" y="4" width="10" height="7" fill="#666"/><rect x="7" y="5" width="8" height="5" fill="#ddd"/><rect x="14" y="13" width="2" height="1" fill="#0c0"/><rect x="3" y="15" width="2" height="1" fill="#222"/><rect x="16" y="15" width="2" height="1" fill="#222"/><rect x="0" y="16" width="21" height="7" fill="#555"/><rect x="1" y="17" width="19" height="5" fill="#eea"/><rect x="1" y="18" width="19" height="2" fill="#bbb"/><rect x="13" y="18" width="4" height="1" fill="#000"/><path d="M2 22h21v4h1v4h1v4H0v-4h1v-4h1z" fill="#555"/><path d="M3 23h19v4h1v4h1v2H1v-2h1v-4h1z" fill="#eea"/><rect x="4" y="25" width="2" height="1" fill="#555"/><rect x="7" y="25" width="2" height="1" fill="#555"/><rect x="10" y="25" width="2" height="1" fill="#555"/><rect x="13" y="25" width="2" height="1" fill="#555"/><rect x="16" y="25" width="3" height="1" fill="#555"/><path d="M4 27h10v5H2v-1h1v-2h1z" fill="#777"/><rect x="13" y="27" width="1" height="1" fill="#333"/><rect x="13" y="30" width="1" height="2" fill="#333"/><rect x="3" y="30" width="1" height="1" fill="#333"/><rect x="15" y="27" width="3" height="2" fill="#444"/><path d="M16 30h1v1h1v1h-3v-1h1z" fill="#333"/><path d="M19 27h3v4h1v1h-4z" fill="#777"/><rect x="21" y="29" width="1" height="2" fill="#444"/><path d="M27 1.5H22" fill="none" stroke="#444" stroke-width="1"/><path d="M22 1V8H24V18H21" fill="none" stroke="#000" stroke-width="2"/><rect x="27" y="0" width="19" height="8" fill="#555"/><rect x="28" y="1" width="17" height="6" fill="#eea"/><rect x="28" y="2" width="17" height="2" fill="#bbb"/><rect x="38" y="2" width="4" height="1" fill="#000"/><path d="M28 7h17v4h1v5H27v-5h1z" fill="#555"/><path d="M29 8h15v4h1v3H28v-3h1z" fill="#eea"/><rect x="30" y="9" width="8" height="1" fill="#444"/><rect x="30" y="10" width="9" height="4" fill="#777"/><rect x="29" y="12" width="1" height="2" fill="#444"/><rect x="38" y="11" width="1" height="3" fill="#444"/><rect x="39" y="9" width="2" height="5" fill="#444"/><rect x="42" y="9" width="2" height="5" fill="#444"/><rect x="39" y="11" width="2" height="1" fill="#999"/><rect x="42" y="11" width="2" height="1" fill="#999"/></svg><span class="t" style="left:406px;top:46px;width:80px">Kingston1A<svg width="80" height="16" fill="#000"><use href="#g4b"/><use href="#g69" x="8"/><use href="#g6e" x="16"/><use href="#g67" x="24"/><use href="#g73" x="32"/><use href="#g74" x="40"/><use href="#g6f" x="48"/><use href="#g6e" x="56"/><use href="#g31" x="64"/><use href="#g41" x="72"/></svg></span><svg style="left:500px;top:7px" width="34" height="31" viewBox="0 0 34 31" shape-rendering="crispEdges"><path d="M17 0.5L34 22.5V30H30V22z" fill="#999"/><path d="M14.5 0h2.5L29.5 22H0.5z" fill="#eea"/><rect x="0" y="22" width="30" height="2" fill="#999"/><rect x="0" y="24" width="30" height="6" fill="#eea"/><path d="M14.6 6h2.8v9h1.6v2.6h-1.6V20h-2.8v-2.4H9V15.2zM14.6 9.6L11.6 15h3z" fill="#c00"/></svg><span class="t" style="left:497px;top:46px;width:40px">Ready<svg width="40" height="16" fill="#000"><use href="#g52"/><use href="#g65" x="8"/><use href="#g61" x="16"/><use href="#g64" x="24"/><use href="#g79" x="32"/></svg></span><svg style="left:927px;top:22px" width="34" height="30" viewBox="0 0 34 30"><defs><pattern id="cck" width="2" height="2" patternUnits="userSpaceOnUse"><rect width="2" height="2" fill="#777"/><rect width="1" height="1" fill="#222"/><rect x="1" y="1" width="1" height="1" fill="#222"/></pattern></defs><path d="M0 4.3H10L14.3 0H20.7L25 4.3H30.5L34 7.8V29H4.7L0 24z" fill="#555"/><path d="M0.6 5.2L4.6 9.2V27.8L0.6 23.7z" fill="#5a5a5a"/><path d="M0.6 5.2L4.6 9.2V12L0.6 8z" fill="#8a8a8a"/><path d="M1.2 5h8.4l1.6 2.7H4.6z" fill="#eee"/><path d="M3.4 6.6h7.2l0.6 1.1H4.6z" fill="#bbb"/><path d="M25.2 5h5l2.7 2.7H27.4z" fill="#eee"/><path d="M26.6 6.6h5l1.1 1.1H27.4z" fill="#bbb"/><path d="M10.4 4.2L14.6 0.6H16.4L11.8 7.6z" fill="#777"/><path d="M11.8 7.6L16 1.6H20.6L26 7.6z" fill="#eee"/><path d="M13 6.2h11.6l1.4 1.4H11.8z" fill="#c4c4c4"/><path d="M16.2 5.2q0.2-1.4 1.4-1.2q1 0.3 1.2 1.2q0.3-1.3 1.5-1.2q1 0.2 1.3 1.4" fill="none" stroke="#222" stroke-width="1.1"/><rect x="5.2" y="8.6" width="28" height="19.6" fill="#757575"/><rect x="5.4" y="9.2" width="27.4" height="3" fill="#b4b4b4"/><rect x="5.4" y="10.2" width="27.4" height="1" fill="#c8c8c8"/><path d="M5.4 13.4H15.5M25 13.4H33" fill="none" stroke="#2a2a2a" stroke-width="1" stroke-dasharray="1.1 0.9"/><path d="M16 13.4H24" fill="none" stroke="#666" stroke-width="1" stroke-dasharray="1.6 1"/><ellipse cx="25.6" cy="21.6" rx="6.6" ry="7" fill="url(#cck)"/><ellipse cx="19.6" cy="21.8" rx="7.8" ry="7" fill="#8a8a8a" stroke="#222" stroke-width="1" stroke-dasharray="1.6 1.4"/><ellipse cx="21.4" cy="22.3" rx="5.6" ry="6.9" fill="#bdbdbd" stroke="#999" stroke-width="0.8"/><path d="M21 19.2q-4.2 3.4 0 7.2q-1.2-1.8-1.2-3.6q0-1.8 1.2-3.6z" fill="#fff"/><circle cx="7.8" cy="19" r="2" fill="#444"/><path d="M9.4 17.6a2.4 2.4 0 0 1 -0.6 3.6" fill="none" stroke="#bbb" stroke-width="0.9"/></svg><svg style="left:982px;top:10px" width="34" height="34" viewBox="0 0 34 34" shape-rendering="crispEdges"><rect x="0" y="0" width="34" height="20" fill="#2ae"/><rect x="0" y="20" width="34" height="14" fill="#0c0"/><path d="M13 19h8v6h1v7h2v2H9v-2h2v-7h2z" fill="#480"/><rect x="1" y="18" width="2" height="14" fill="#fff"/><path d="M6 18h2v3h-1v4h-1v3h-1v3h-1v1H3v-3h1v-3h1v-4h1z" fill="#fff"/><rect x="9" y="18" width="2" height="2" fill="#fff"/><rect x="9" y="22" width="2" height="10" fill="#fff"/><rect x="13" y="22" width="2" height="10" fill="#fff"/><rect x="15" y="22" width="3" height="2" fill="#fff"/><rect x="20" y="22" width="2" height="9" fill="#fff"/><rect x="21" y="30" width="5" height="2" fill="#fff"/><rect x="25" y="22" width="2" height="10" fill="#fff"/><rect x="29" y="22" width="4" height="2" fill="#fff"/><rect x="28" y="23" width="2" height="3" fill="#fff"/><rect x="29" y="26" width="4" height="2" fill="#fff"/><rect x="31" y="27" width="2" height="3" fill="#fff"/><rect x="28" y="30" width="4" height="2" fill="#fff"/></svg><svg style="left:982px;top:10px" width="34" height="20" viewBox="0 0 34 20"><path d="M0 0h9.8A9.8 9.8 0 0 1 0 9.8z" fill="#ee2"/><path d="M19.8 0L17 18.6" fill="none" stroke="#555" stroke-width="3.7"/><path d="M12 3.6L28 4.4" fill="none" stroke="#555" stroke-width="3.4"/></svg><span class="t" style="left:979px;top:46px;width:40px">Ready<svg width="40" height="16" fill="#000"><use href="#g52"/><use href="#g65" x="8"/><use href="#g61" x="16"/><use href="#g64" x="24"/><use href="#g79" x="32"/></svg></span><svg style="left:1037px;top:20px" width="149" height="34" viewBox="0 0 149 34" shape-rendering="crispEdges"><rect x="0" y="0" width="149" height="34" fill="#049"/><rect x="2" y="2" width="145" height="30" fill="#2ae"/><rect x="4" y="4" width="141" height="26" fill="#fff"/></svg><span class="t" style="left:1047px;top:30px;width:128px">8:14pm. 28/10/23<svg width="128" height="16" fill="#000"><use href="#g38"/><use href="#g3a" x="8"/><use href="#g31" x="16"/><use href="#g34" x="24"/><use href="#g70" x="32"/><use href="#g6d" x="40"/><use href="#g2e" x="48"/><use href="#g32" x="64"/><use href="#g38" x="72"/><use href="#g2f" x="80"/><use href="#g31" x="88"/><use href="#g30" x="96"/><use href="#g2f" x="104"/><use href="#g32" x="112"/><use href="#g33" x="120"/></svg></span><svg style="left:1194px;top:20px" width="34" height="34" viewBox="0 0 34 34" shape-rendering="crispEdges"><path d="M1 0h32v1h1v32h-1v1H1v-1H0V1h1z" fill="#555"/><rect x="1" y="1" width="32" height="32" fill="#eea"/><path d="M4 4h26v1h1v21h-1v1H4v-1H3V5h1z" fill="#555"/><rect x="4" y="5" width="26" height="21" fill="#ddd"/><path d="M4 5h9v1H9v1H7v1H6v2H5v4H4z" fill="#fff"/><path d="M30 15v11H22v-1h5v-1h1v-2h1v-7z" fill="#c4c4c4"/><rect x="3" y="29" width="8" height="2" fill="#777"/><rect x="27" y="28" width="3" height="3" fill="#0c0"/></svg><svg style="left:1241px;top:18px" width="26" height="41" viewBox="0 0 26 41"><defs><pattern id="ck" width="2" height="2" patternUnits="userSpaceOnUse"><rect width="2" height="2" fill="#0c0"/><rect width="1" height="1" fill="#580"/><rect x="1" y="1" width="1" height="1" fill="#580"/></pattern></defs><path d="M12.5 0C20 2 24 12 23.5 20H1C0.5 11 5 1 12.5 0z" fill="#580"/><path d="M11.5 0C5 1 0.5 11 1 20H19C19 11 17 3 11.5 0z" fill="url(#ck)"/><path d="M11.5 0C5 1 0.5 11 1 20H5C4 11 7 3 11.5 0z" fill="#0c0"/><path d="M1 22H23C22 28 17 31.5 12.5 31.5C7 31.5 2 28 1 22z" fill="#580"/><path d="M1 22H19C18 28 15 31 11.5 31.5C7 31.5 2 28 1 22z" fill="url(#ck)"/><path d="M1 22H5C5.5 27 8 30 11.5 31.5C6 31 1.5 27 1 22z" fill="#0c0"/><path d="M1 20.1H23.5" fill="none" stroke="#444" stroke-width="1.6"/><path d="M0 30.5L25 39" fill="none" stroke="#0c0" stroke-width="2"/><path d="M11 31l3-1" fill="none" stroke="#580" stroke-width="2"/></svg></div><div class="menu"><div class="mt"><span class="t" style="left:16px;top:2px;width:88px">File server<svg width="88" height="16" fill="#000"><use href="#g46"/><use href="#g69" x="8"/><use href="#g6c" x="16"/><use href="#g65" x="24"/><use href="#g73" x="40"/><use href="#g65" x="48"/><use href="#g72" x="56"/><use href="#g76" x="64"/><use href="#g65" x="72"/><use href="#g72" x="80"/></svg></span></div><div class="mi" style="top:20px"><span class="t" style="left:15px;top:3px;width:56px">FS list<svg width="56" height="16" fill="#000"><use href="#g46"/><use href="#g53" x="8"/><use href="#g6c" x="24"/><use href="#g69" x="32"/><use href="#g73" x="40"/><use href="#g74" x="48"/></svg></span></div><div class="mi" style="top:42px"><span class="t" style="left:15px;top:3px;width:40px">Logon<svg width="40" height="16" fill="#000"><use href="#g4c"/><use href="#g6f" x="8"/><use href="#g67" x="16"/><use href="#g6f" x="24"/><use href="#g6e" x="32"/></svg></span><svg style="left:109px;top:5px" width="10" height="12" viewBox="0 0 10 12"><path d="M0 0L10 5.5L0 11z" fill="#aaa"/><path d="M0 0L10 5.5L8 5.6L1 2z" fill="#ccc"/></svg></div><div class="mi" style="top:64px"><span class="t" style="left:15px;top:3px;width:64px">Open &#x27;$&#x27;<svg width="64" height="16" fill="#000"><use href="#g4f"/><use href="#g70" x="8"/><use href="#g65" x="16"/><use href="#g6e" x="24"/><use href="#g27" x="40"/><use href="#g24" x="48"/><use href="#g27" x="56"/></svg></span><svg style="left:109px;top:5px" width="10" height="12" viewBox="0 0 10 12"><path d="M0 0L10 5.5L0 11z" fill="#aaa"/><path d="M0 0L10 5.5L8 5.6L1 2z" fill="#ccc"/></svg></div><div class="mi" style="top:86px"><div class="hl"></div><span class="t" style="left:15px;top:3px;width:32px">Free<svg width="32" height="16" fill="#fff"><use href="#g46"/><use href="#g72" x="8"/><use href="#g65" x="16"/><use href="#g65" x="24"/></svg></span></div><div class="mi" style="top:108px"><span class="t" style="left:15px;top:3px;width:24px">Bye<svg width="24" height="16" fill="#000"><use href="#g42"/><use href="#g79" x="8"/><use href="#g65" x="16"/></svg></span></div></div>
</body></html>
